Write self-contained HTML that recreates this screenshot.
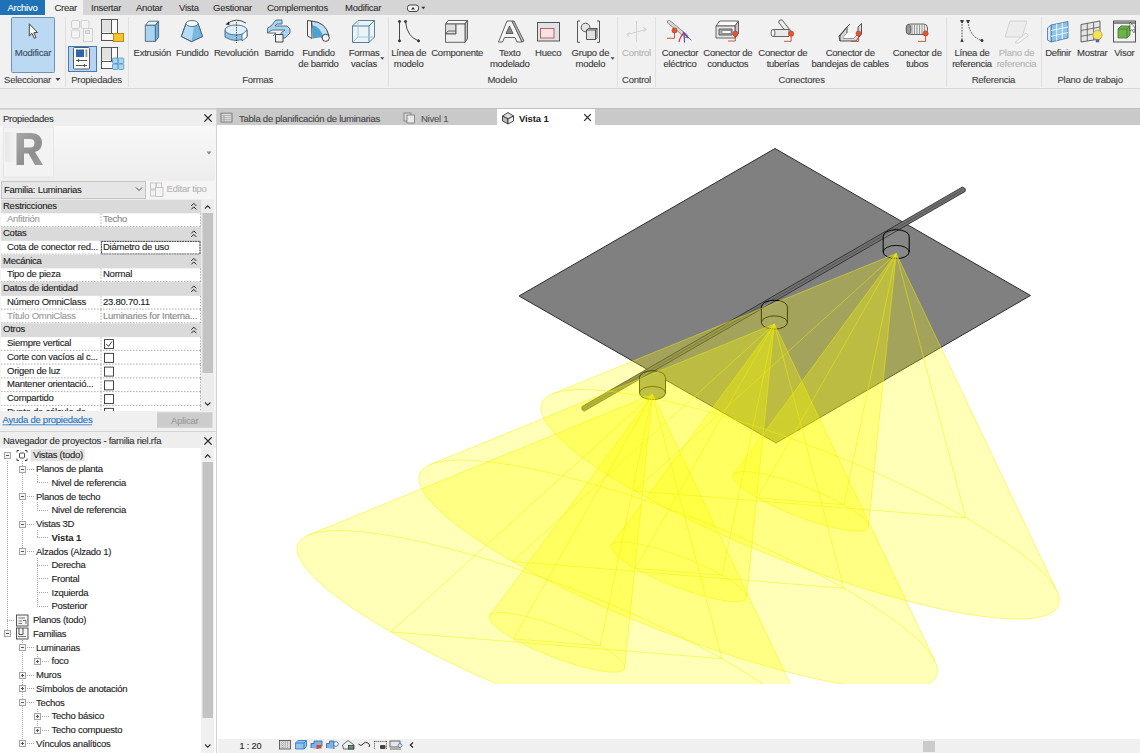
<!DOCTYPE html>
<html><head><meta charset="utf-8"><style>
html,body{margin:0;padding:0;width:1140px;height:753px;overflow:hidden;background:#fff}
svg{display:block;font-family:"Liberation Sans", sans-serif}
</style></head><body>
<svg width="1140" height="753" viewBox="0 0 1140 753">
<rect x="0" y="0" width="1140" height="753" fill="#f0f0f0" />
<rect x="0" y="0" width="1140" height="15" fill="#d5d5d5" />
<rect x="0" y="0" width="45" height="15" fill="#1f72b5" />
<rect x="45" y="0" width="38" height="15" fill="#f1f1f1" />
<text x="22.5" y="10.9" font-size="9.5" fill="#ffffff" stroke="#ffffff" stroke-width="0.12" text-anchor="middle" font-weight="normal" letter-spacing="-0.25" >Archivo</text>
<text x="54.5" y="10.9" font-size="9.5" fill="#333" stroke="#333" stroke-width="0.12" text-anchor="start" font-weight="normal" letter-spacing="-0.25" >Crear</text>
<text x="91" y="10.9" font-size="9.5" fill="#333" stroke="#333" stroke-width="0.12" text-anchor="start" font-weight="normal" letter-spacing="-0.25" >Insertar</text>
<text x="136" y="10.9" font-size="9.5" fill="#333" stroke="#333" stroke-width="0.12" text-anchor="start" font-weight="normal" letter-spacing="-0.25" >Anotar</text>
<text x="179" y="10.9" font-size="9.5" fill="#333" stroke="#333" stroke-width="0.12" text-anchor="start" font-weight="normal" letter-spacing="-0.25" >Vista</text>
<text x="213" y="10.9" font-size="9.5" fill="#333" stroke="#333" stroke-width="0.12" text-anchor="start" font-weight="normal" letter-spacing="-0.25" >Gestionar</text>
<text x="267" y="10.9" font-size="9.5" fill="#333" stroke="#333" stroke-width="0.12" text-anchor="start" font-weight="normal" letter-spacing="-0.25" >Complementos</text>
<text x="345" y="10.9" font-size="9.5" fill="#333" stroke="#333" stroke-width="0.12" text-anchor="start" font-weight="normal" letter-spacing="-0.25" >Modificar</text>
<rect x="0" y="15" width="1140" height="74" fill="#f1f1f1" />
<line x1="0" y1="88.5" x2="1140" y2="88.5" stroke="#d9d9d9" stroke-width="1" />
<line x1="65.5" y1="17" x2="65.5" y2="87" stroke="#e0e0e0" stroke-width="1" />
<line x1="128.5" y1="17" x2="128.5" y2="87" stroke="#e0e0e0" stroke-width="1" />
<line x1="388.5" y1="17" x2="388.5" y2="87" stroke="#e0e0e0" stroke-width="1" />
<line x1="617.5" y1="17" x2="617.5" y2="87" stroke="#e0e0e0" stroke-width="1" />
<line x1="655.5" y1="17" x2="655.5" y2="87" stroke="#e0e0e0" stroke-width="1" />
<line x1="946.5" y1="17" x2="946.5" y2="87" stroke="#e0e0e0" stroke-width="1" />
<line x1="1041.5" y1="17" x2="1041.5" y2="87" stroke="#e0e0e0" stroke-width="1" />
<rect x="0" y="89" width="1140" height="20" fill="#eeeeee" />
<line x1="0" y1="108.5" x2="216" y2="108.5" stroke="#cfcfcf" stroke-width="1" />
<rect x="0" y="109" width="216" height="323" fill="#f5f5f5" />
<rect x="0" y="109" width="216" height="17" fill="#eeeeee" />
<text x="3" y="121.9" font-size="9.5" fill="#333" stroke="#333" stroke-width="0.12" text-anchor="start" font-weight="normal" letter-spacing="-0.25" >Propiedades</text>
<rect x="216" y="108.5" width="924" height="16.5" fill="#c9c9c9" />
<rect x="497" y="108.5" width="98" height="16.5" fill="#ffffff" />
<text x="239" y="121.5" font-size="9.5" fill="#444" stroke="#444" stroke-width="0.12" text-anchor="start" font-weight="normal" letter-spacing="-0.25" >Tabla de planificación de luminarias</text>
<text x="421" y="121.5" font-size="9.5" fill="#555" stroke="#555" stroke-width="0.12" text-anchor="start" font-weight="normal" letter-spacing="-0.25" >Nivel 1</text>
<text x="519" y="121.5" font-size="9.5" fill="#222" stroke="#222" stroke-width="0" text-anchor="start" font-weight="bold" letter-spacing="-0.1" >Vista 1</text>
<rect x="216" y="125" width="924" height="628" fill="#ffffff" />
<line x1="216.5" y1="109" x2="216.5" y2="753" stroke="#d2d2d2" stroke-width="1" />
<rect x="218" y="739" width="922" height="14" fill="#f0f0f0" />
<text x="239.5" y="748.7" font-size="9" fill="#222" stroke="#222" stroke-width="0.12" text-anchor="start" font-weight="normal" letter-spacing="-0.1" >1 : 20</text>
<text x="152.3" y="56.3" font-size="9.5" fill="#3a3a3a" stroke="#3a3a3a" stroke-width="0.12" text-anchor="middle" font-weight="normal" letter-spacing="-0.25" >Extrusión</text>
<text x="192.2" y="56.3" font-size="9.5" fill="#3a3a3a" stroke="#3a3a3a" stroke-width="0.12" text-anchor="middle" font-weight="normal" letter-spacing="-0.25" >Fundido</text>
<text x="236.2" y="56.3" font-size="9.5" fill="#3a3a3a" stroke="#3a3a3a" stroke-width="0.12" text-anchor="middle" font-weight="normal" letter-spacing="-0.25" >Revolución</text>
<text x="279" y="56.3" font-size="9.5" fill="#3a3a3a" stroke="#3a3a3a" stroke-width="0.12" text-anchor="middle" font-weight="normal" letter-spacing="-0.25" >Barrido</text>
<text x="318.5" y="56.3" font-size="9.5" fill="#3a3a3a" stroke="#3a3a3a" stroke-width="0.12" text-anchor="middle" font-weight="normal" letter-spacing="-0.25" >Fundido</text>
<text x="318.5" y="67.2" font-size="9.5" fill="#3a3a3a" stroke="#3a3a3a" stroke-width="0.12" text-anchor="middle" font-weight="normal" letter-spacing="-0.25" >de barrido</text>
<text x="364.1" y="56.3" font-size="9.5" fill="#3a3a3a" stroke="#3a3a3a" stroke-width="0.12" text-anchor="middle" font-weight="normal" letter-spacing="-0.25" >Formas</text>
<text x="364.1" y="67.2" font-size="9.5" fill="#3a3a3a" stroke="#3a3a3a" stroke-width="0.12" text-anchor="middle" font-weight="normal" letter-spacing="-0.25" >vacías</text>
<text x="408.7" y="56.3" font-size="9.5" fill="#3a3a3a" stroke="#3a3a3a" stroke-width="0.12" text-anchor="middle" font-weight="normal" letter-spacing="-0.25" >Línea de</text>
<text x="408.7" y="67.2" font-size="9.5" fill="#3a3a3a" stroke="#3a3a3a" stroke-width="0.12" text-anchor="middle" font-weight="normal" letter-spacing="-0.25" >modelo</text>
<text x="457.2" y="56.3" font-size="9.5" fill="#3a3a3a" stroke="#3a3a3a" stroke-width="0.12" text-anchor="middle" font-weight="normal" letter-spacing="-0.25" >Componente</text>
<text x="509.8" y="56.3" font-size="9.5" fill="#3a3a3a" stroke="#3a3a3a" stroke-width="0.12" text-anchor="middle" font-weight="normal" letter-spacing="-0.25" >Texto</text>
<text x="509.8" y="67.2" font-size="9.5" fill="#3a3a3a" stroke="#3a3a3a" stroke-width="0.12" text-anchor="middle" font-weight="normal" letter-spacing="-0.25" >modelado</text>
<text x="548.2" y="56.3" font-size="9.5" fill="#3a3a3a" stroke="#3a3a3a" stroke-width="0.12" text-anchor="middle" font-weight="normal" letter-spacing="-0.25" >Hueco</text>
<text x="590.4" y="56.3" font-size="9.5" fill="#3a3a3a" stroke="#3a3a3a" stroke-width="0.12" text-anchor="middle" font-weight="normal" letter-spacing="-0.25" >Grupo de</text>
<text x="590.4" y="67.2" font-size="9.5" fill="#3a3a3a" stroke="#3a3a3a" stroke-width="0.12" text-anchor="middle" font-weight="normal" letter-spacing="-0.25" >modelo</text>
<text x="636.5" y="56.3" font-size="9.5" fill="#b4b4b4" stroke="#b4b4b4" stroke-width="0.12" text-anchor="middle" font-weight="normal" letter-spacing="-0.25" >Control</text>
<text x="680" y="56.3" font-size="9.5" fill="#3a3a3a" stroke="#3a3a3a" stroke-width="0.12" text-anchor="middle" font-weight="normal" letter-spacing="-0.25" >Conector</text>
<text x="680" y="67.2" font-size="9.5" fill="#3a3a3a" stroke="#3a3a3a" stroke-width="0.12" text-anchor="middle" font-weight="normal" letter-spacing="-0.25" >eléctrico</text>
<text x="727.8" y="56.3" font-size="9.5" fill="#3a3a3a" stroke="#3a3a3a" stroke-width="0.12" text-anchor="middle" font-weight="normal" letter-spacing="-0.25" >Conector de</text>
<text x="727.8" y="67.2" font-size="9.5" fill="#3a3a3a" stroke="#3a3a3a" stroke-width="0.12" text-anchor="middle" font-weight="normal" letter-spacing="-0.25" >conductos</text>
<text x="782.8" y="56.3" font-size="9.5" fill="#3a3a3a" stroke="#3a3a3a" stroke-width="0.12" text-anchor="middle" font-weight="normal" letter-spacing="-0.25" >Conector de</text>
<text x="782.8" y="67.2" font-size="9.5" fill="#3a3a3a" stroke="#3a3a3a" stroke-width="0.12" text-anchor="middle" font-weight="normal" letter-spacing="-0.25" >tuberías</text>
<text x="850.2" y="56.3" font-size="9.5" fill="#3a3a3a" stroke="#3a3a3a" stroke-width="0.12" text-anchor="middle" font-weight="normal" letter-spacing="-0.25" >Conector de</text>
<text x="850.2" y="67.2" font-size="9.5" fill="#3a3a3a" stroke="#3a3a3a" stroke-width="0.12" text-anchor="middle" font-weight="normal" letter-spacing="-0.25" >bandejas de cables</text>
<text x="917.2" y="56.3" font-size="9.5" fill="#3a3a3a" stroke="#3a3a3a" stroke-width="0.12" text-anchor="middle" font-weight="normal" letter-spacing="-0.25" >Conector de</text>
<text x="917.2" y="67.2" font-size="9.5" fill="#3a3a3a" stroke="#3a3a3a" stroke-width="0.12" text-anchor="middle" font-weight="normal" letter-spacing="-0.25" >tubos</text>
<text x="972" y="56.3" font-size="9.5" fill="#3a3a3a" stroke="#3a3a3a" stroke-width="0.12" text-anchor="middle" font-weight="normal" letter-spacing="-0.25" >Línea de</text>
<text x="972" y="67.2" font-size="9.5" fill="#3a3a3a" stroke="#3a3a3a" stroke-width="0.12" text-anchor="middle" font-weight="normal" letter-spacing="-0.25" >referencia</text>
<text x="1016.5" y="56.3" font-size="9.5" fill="#b4b4b4" stroke="#b4b4b4" stroke-width="0.12" text-anchor="middle" font-weight="normal" letter-spacing="-0.25" >Plano de</text>
<text x="1016.5" y="67.2" font-size="9.5" fill="#b4b4b4" stroke="#b4b4b4" stroke-width="0.12" text-anchor="middle" font-weight="normal" letter-spacing="-0.25" >referencia</text>
<text x="1058" y="56.3" font-size="9.5" fill="#3a3a3a" stroke="#3a3a3a" stroke-width="0.12" text-anchor="middle" font-weight="normal" letter-spacing="-0.25" >Definir</text>
<text x="1092.3" y="56.3" font-size="9.5" fill="#3a3a3a" stroke="#3a3a3a" stroke-width="0.12" text-anchor="middle" font-weight="normal" letter-spacing="-0.25" >Mostrar</text>
<text x="1124.3" y="56.3" font-size="9.5" fill="#3a3a3a" stroke="#3a3a3a" stroke-width="0.12" text-anchor="middle" font-weight="normal" letter-spacing="-0.25" >Visor</text>
<text x="27.5" y="83.2" font-size="9.5" fill="#444" stroke="#444" stroke-width="0.12" text-anchor="middle" font-weight="normal" letter-spacing="-0.25" >Seleccionar</text>
<text x="96.5" y="83.2" font-size="9.5" fill="#444" stroke="#444" stroke-width="0.12" text-anchor="middle" font-weight="normal" letter-spacing="-0.25" >Propiedades</text>
<text x="257.6" y="83.2" font-size="9.5" fill="#444" stroke="#444" stroke-width="0.12" text-anchor="middle" font-weight="normal" letter-spacing="-0.25" >Formas</text>
<text x="502.3" y="83.2" font-size="9.5" fill="#444" stroke="#444" stroke-width="0.12" text-anchor="middle" font-weight="normal" letter-spacing="-0.25" >Modelo</text>
<text x="636.5" y="83.2" font-size="9.5" fill="#444" stroke="#444" stroke-width="0.12" text-anchor="middle" font-weight="normal" letter-spacing="-0.25" >Control</text>
<text x="801.6" y="83.2" font-size="9.5" fill="#444" stroke="#444" stroke-width="0.12" text-anchor="middle" font-weight="normal" letter-spacing="-0.25" >Conectores</text>
<text x="993.4" y="83.2" font-size="9.5" fill="#444" stroke="#444" stroke-width="0.12" text-anchor="middle" font-weight="normal" letter-spacing="-0.25" >Referencia</text>
<text x="1090.1" y="83.2" font-size="9.5" fill="#444" stroke="#444" stroke-width="0.12" text-anchor="middle" font-weight="normal" letter-spacing="-0.25" >Plano de trabajo</text>
<path d="M55.4 78.0h5l-2.5 3z" fill="#444"/>
<path d="M380.3 57.25h4l-2.0 2.5z" fill="#444"/>
<path d="M610.6 57.25h4l-2.0 2.5z" fill="#444"/>
<path d="M421.3 6.75h4l-2.0 2.5z" fill="#333"/>
<rect x="11.5" y="17.5" width="43" height="55" rx="1" fill="#bcd9f4" stroke="#6f92b6" stroke-width="1"/>
<text x="33" y="55.8" font-size="9.5" fill="#3a4a5a" stroke="#3a4a5a" stroke-width="0.12" text-anchor="middle" font-weight="normal" letter-spacing="-0.25" >Modificar</text>
<path d="M29.3 23.8 L29.3 36 L32 33.4 L34.2 38.3 L36 37.5 L33.8 32.7 L37.4 32.5 Z" fill="#fff" stroke="#333" stroke-width="0.9" stroke-linejoin="round"/>
<g fill="#f3f3f3" stroke="#cfcfcf" stroke-width="1"><rect x="71.5" y="20.5" width="8" height="8" rx="1.5"/><rect x="81" y="20.5" width="8" height="8" rx="1.5"/><rect x="71.5" y="30" width="8" height="8" rx="1.5"/><rect x="83.5" y="28.5" width="9" height="13"/><rect x="85.5" y="30.5" width="4" height="3" fill="#e3e3e3"/></g>
<g stroke="#555" stroke-width="1"><rect x="101.5" y="19.5" width="16" height="21" fill="#fafafa"/><rect x="102" y="20" width="9" height="12" fill="#e2e2e2" stroke="none"/><line x1="111.5" y1="20" x2="111.5" y2="33"/><line x1="101.5" y1="33.5" x2="117.5" y2="33.5"/><rect x="113.5" y="33.5" width="10" height="8" fill="#f4c431" stroke="#b88c16"/></g>
<rect x="68.5" y="46.5" width="28" height="25" fill="#b7d5f2" stroke="#3e7dbd" stroke-width="1"/>
<rect x="73.5" y="47.5" width="16" height="21.5" rx="1" fill="#fbfbfb" stroke="#5b5b5b" stroke-width="1"/>
<rect x="76" y="49.5" width="8" height="7.5" fill="#2f68a8"/><rect x="85.5" y="49.5" width="1.8" height="7.5" fill="#999"/>
<g stroke="#444" stroke-width="0.9"><line x1="76" y1="60.5" x2="87" y2="60.5"/><line x1="78.5" y1="59" x2="78.5" y2="62"/><line x1="76" y1="65.5" x2="87" y2="65.5"/><line x1="84.5" y1="64" x2="84.5" y2="67"/></g>
<g stroke="#555" stroke-width="1"><rect x="101.5" y="47.5" width="16" height="21" fill="#fafafa"/><rect x="102" y="48" width="9" height="12" fill="#e2e2e2" stroke="none"/><line x1="111.5" y1="48" x2="111.5" y2="61"/><line x1="101.5" y1="61.5" x2="117.5" y2="61.5"/></g>
<g fill="#a9d6f2" stroke="#4f8fc0" stroke-width="0.8"><rect x="112.5" y="58" width="5.5" height="5.5" rx="1"/><rect x="118.3" y="58" width="5.5" height="5.5" rx="1"/><rect x="112.5" y="64" width="5.5" height="5.5" rx="1"/><rect x="118.3" y="64" width="5.5" height="5.5" rx="1"/></g>
<g stroke="#47657e" stroke-width="0.9" stroke-linejoin="round"><path d="M145.3 25.3 L148.8 21.2 L158.6 21.2 L155.3 25.3 Z" fill="#e9f4fb"/><path d="M155.3 25.3 L158.6 21.2 L158.6 37.4 L155.3 41.4 Z" fill="#6fb0da"/><rect x="145.3" y="25.3" width="10" height="16.1" fill="#a8d4f0"/></g>
<g stroke="#47657e" stroke-width="0.9" stroke-linejoin="round"><path d="M186 23.5 L181.3 36.5 L191.5 41.6 L202.5 36.5 L198 23.5 Z" fill="#b5dcf3"/><path d="M194 26 L198 23.5 L202.5 36.5 L191.5 41.6 Z" fill="#79b8df" stroke="none"/><path d="M181.3 36.5 L191.5 41.6 L202.5 36.5" fill="none"/><path d="M186 23.5 L181.3 36.5 M198 23.5 L202.5 36.5" fill="none"/><ellipse cx="192" cy="23.5" rx="6" ry="3" fill="#f4f9fc"/></g>
<g stroke="#47657e" stroke-width="0.9" stroke-linejoin="round"><path d="M225 30 L225 37 Q236 44 247 37 L247 30" fill="#8cc5e6"/><ellipse cx="236" cy="30" rx="11" ry="5" fill="#dff0fa"/><path d="M242 34.5 L247 30 L247 37 L242 41 Z" fill="#fff"/><path d="M227.5 23.5 Q236 17 246 23" fill="none" stroke="#333"/><path d="M225.5 24.5 L229 21.5 L229.5 25 Z" fill="#222" stroke="none"/><line x1="236.5" y1="22" x2="236.5" y2="43" stroke="#333" stroke-width="0.8" stroke-dasharray="1.5 1"/></g>
<g stroke="#47657e" stroke-width="0.9" stroke-linejoin="round"><path d="M271 26 L276 20 L282 20 L282 24 L277 24 L275 26 L287 26 L290 29 L290 33 L285 38 L281 38 L281 33 L285 30 L272 30 L267.5 33 L267.5 28 Z" fill="#a8d4f0"/><path d="M268 33 L276 33 L273 36" fill="none"/><rect x="275.5" y="34.5" width="7.5" height="7.5" fill="#f0f0f0" stroke="#333"/></g>
<g stroke="#333" stroke-width="0.9" stroke-linejoin="round"><path d="M311.5 21 Q326 22 329 36 L322 38 Q320 28 312 27 Z" fill="#bfe0f4"/><path d="M312 25 Q321 27 323 37 L313 38.5 Z" fill="#4ea0d0" stroke="none"/><path d="M307.5 20.5 L311.5 21 L312 38.5 L307.5 36 Z" fill="#f4f4f4"/><circle cx="325.7" cy="37.8" r="3.6" fill="#f4f4f4"/></g>
<g stroke="#4a6f8f" stroke-width="0.9" fill="none" stroke-linejoin="round"><path d="M352.5 26 L358 20.5 L374.5 20.5 L374.5 37 L369 42.5 L352.5 42.5 Z" fill="#e8f3fa"/><path d="M352.5 26 L369 26 L374.5 20.5 M369 26 L369 42.5"/><path d="M358 20.5 L358 37 L374.5 37 M358 37 L352.5 42.5" stroke="#9ec3dc"/></g>
<g stroke="#333" stroke-width="0.9" fill="#333"><line x1="399.5" y1="21.5" x2="399.5" y2="40.8"/><path d="M405.5 21.5 Q407 37 418.5 40.8" fill="none"/><circle cx="399.5" cy="21.5" r="1.1"/><circle cx="399.5" cy="40.8" r="1.1"/><circle cx="405.5" cy="21.5" r="1.1"/><circle cx="418.5" cy="40.8" r="1.1"/></g>
<g stroke="#555" stroke-width="0.9" stroke-linejoin="round"><path d="M445.5 24 L448 20.5 L467.5 20.5 L465 24 Z" fill="#f7f7f7"/><path d="M465 24 L467.5 20.5 L467.5 39 L465 42.3 Z" fill="#c6c6c6"/><path d="M445.5 24 L456 24 L456 34 L445.5 34 Z" fill="#dedede"/><path d="M456 24 L465 24 L465 42.3 L445.5 42.3 L445.5 34 L456 34 Z" fill="#efefef"/><path d="M445.5 34 L448 31 L456 31" fill="none"/></g>
<g stroke="#555" stroke-width="0.9" stroke-linejoin="round"><path d="M507 21 L512 21 L522 42 L517 42 L515 37.5 L504.5 37.5 L502.5 42 L498.5 42 Z" fill="#f5f5f5"/><path d="M512 21 L514 21 L524 41 L522 42 Z" fill="#bdbdbd"/><path d="M506 33.5 L513 33.5 L509.5 26 Z" fill="#888"/></g>
<rect x="537.5" y="22.5" width="22" height="18.5" fill="#dfe3e6" stroke="#555" stroke-width="1"/>
<rect x="540.5" y="28.5" width="13.5" height="9.5" fill="#f6e4e4" stroke="#c0504d" stroke-width="0.9"/>
<g stroke="#444" stroke-width="0.9" fill="none"><path d="M580 21 L577.5 21 L577.5 42.3 L580 42.3"/><path d="M597 21 L599.5 21 L599.5 42.3 L597 42.3"/><circle cx="585.5" cy="27.5" r="4.3" fill="#e6e6e6"/><path d="M586.5 30 L588.5 28.5 L597 28.5 L597 37.5 L595.5 39.5 L586.5 39.5 Z" fill="#dde1e5"/><path d="M586.5 30 L595.5 30 L597 28.5 M595.5 30 L595.5 39.5"/></g>
<g stroke="#d2d2d2" stroke-width="1" fill="none"><line x1="636.5" y1="21" x2="636.5" y2="42"/><line x1="627" y1="34.5" x2="646" y2="29.5"/><path d="M643 27.5 L646.5 29.5 L643.5 31.5"/><path d="M630 32.5 L626.5 34.5 L629.5 36.5"/></g>
<g stroke-linecap="round"><path d="M669 22 L686 36" stroke="#888" stroke-width="4"/><path d="M669 22 L686 36" stroke="#d8d8d8" stroke-width="2.4"/><path d="M683 32 L691 40" stroke="#4a5bb0" stroke-width="0.9"/><path d="M679 41.5 Q681 35 684 33" stroke="#c53030" stroke-width="1.1" fill="none"/><path d="M684.5 42 L684 33 L688 38" stroke="#6a3ba8" stroke-width="1.1" fill="none"/></g>
<g stroke="#c24a2a" stroke-width="0.9" fill="none"><path d="M674.5 30.4 L674.5 38.3 L667 38.3"/></g><circle cx="674.5" cy="30.4" r="2.6" fill="#e4572e" stroke="#a33" stroke-width="0.5"/>
<g stroke="#555" stroke-width="0.9" stroke-linejoin="round"><path d="M716 26 L719.5 21 L738.5 21 L735 26 Z" fill="#fafafa"/><path d="M735 26 L738.5 21 L738.5 33 L735 38 Z" fill="#c8c8c8"/><rect x="716" y="26" width="19" height="12" fill="#e6e6e6"/><rect x="719" y="29" width="13" height="6" fill="#aaa"/><rect x="722" y="30.5" width="9" height="3" fill="#fff" stroke="#666" stroke-width="0.6"/></g>
<g stroke="#c24a2a" stroke-width="0.9" fill="none"><path d="M735.3 33.7 L735.3 41 L728 41"/></g><circle cx="735.3" cy="33.7" r="2.6" fill="#e4572e" stroke="#a33" stroke-width="0.5"/>
<g stroke="#555" stroke-width="0.9"><path d="M781 22 L789 32" stroke="#666" stroke-width="5.2" stroke-linecap="round"/><path d="M781 22 L789 32" stroke="#eee" stroke-width="3.4" stroke-linecap="round"/><path d="M773 29.5 L789 29.5 L789 36.5 L773 36.5" fill="#e8e8e8"/><ellipse cx="773" cy="33" rx="2" ry="3.5" fill="#f5f5f5"/></g>
<g stroke="#c24a2a" stroke-width="0.9" fill="none"><path d="M791.2 33.7 L791.2 41.3 L784 41.3"/></g><circle cx="791.2" cy="33.7" r="2.6" fill="#e4572e" stroke="#a33" stroke-width="0.5"/>
<g stroke="#444" stroke-width="0.9" stroke-linejoin="round"><path d="M839 36 L847 27 L847 33 L843 38 L854 38 L858 33 L858 27 L861.5 23.5 L861.5 34 L856 41 L840 41 Z" fill="#d8d8d8"/><path d="M840 41 L840 36 L847 27" fill="none"/><path d="M843 38 L847 33 L858 33 L854 38 Z" fill="#fff" stroke="none"/><path d="M847 27 L850 24" fill="none"/></g>
<g stroke="#c24a2a" stroke-width="0.9" fill="none"><path d="M858.5 33.5 L858.5 41.4 L851 41.4"/></g><circle cx="858.5" cy="33.5" r="2.6" fill="#e4572e" stroke="#a33" stroke-width="0.5"/>
<g stroke="#555" stroke-width="0.9"><rect x="906.5" y="24" width="21" height="10.5" rx="4" fill="#e8e8e8"/><ellipse cx="908.5" cy="29.3" rx="2.3" ry="5" fill="#999"/><line x1="912" y1="24.5" x2="912" y2="34" stroke="#777" stroke-width="0.7"/><line x1="914.5" y1="24.5" x2="914.5" y2="34" stroke="#777" stroke-width="0.7"/><line x1="917" y1="24.5" x2="917" y2="34" stroke="#777" stroke-width="0.7"/><line x1="919.5" y1="24.5" x2="919.5" y2="34" stroke="#777" stroke-width="0.7"/><line x1="922" y1="24.5" x2="922" y2="34" stroke="#777" stroke-width="0.7"/><line x1="924.5" y1="24.5" x2="924.5" y2="34" stroke="#777" stroke-width="0.7"/></g>
<g stroke="#c24a2a" stroke-width="0.9" fill="none"><path d="M925.6 33.4 L925.6 41.4 L918 41.4"/></g><circle cx="925.6" cy="33.4" r="2.6" fill="#e4572e" stroke="#a33" stroke-width="0.5"/>
<g stroke="#333" stroke-width="0.9" fill="#333"><line x1="962" y1="21.5" x2="962" y2="40.5" stroke-dasharray="1.6 1.2"/><path d="M968 21.5 Q969.5 37 982 40.5" fill="none" stroke-dasharray="1.6 1.2"/><path d="M960.5 20.5 L963.5 20.5 L962 23 Z"/><path d="M966.5 20.5 L969.5 20.5 L968 23 Z"/><path d="M960.8 41.5 L963.2 41.5 L962 39.5 Z"/><circle cx="982" cy="40.5" r="1.1"/></g>
<g stroke="#cfcfcf" stroke-width="0.9" fill="#ececec"><path d="M1010 21 L1027 21 L1022 37 L1005 37 Z"/><path d="M1016 41.5 L1026 33 L1028.5 35.5 L1018.5 43 L1015.5 43 Z" fill="#f3f3f3"/></g>
<g stroke="#3f6f9c" stroke-width="0.8" stroke-linejoin="round"><path d="M1051 25 L1068 21.5 L1068 38 L1051 42 Z" fill="#8ec3ea"/><path d="M1047.5 28 L1051 25 L1051 42 L1047.5 40 Z" fill="#d8ecf8"/><path d="M1056.7 23.8 L1056.7 40.6 M1062.3 22.7 L1062.3 39.3 M1051 30.6 L1068 27 M1051 36.3 L1068 32.5" fill="none" stroke="#e9f5fc" stroke-width="1"/></g>
<g stroke="#444" stroke-width="0.8" stroke-linejoin="round"><path d="M1081 24.5 L1100 21 L1100 39 L1081 42 Z" fill="#e4e4e4"/><path d="M1087.3 23.3 L1087.3 41 M1093.6 22.2 L1093.6 40 M1081 30.5 L1100 27 M1081 36.3 L1100 33" fill="none" stroke="#555"/><circle cx="1097.5" cy="35" r="4.6" fill="#f6e35a" stroke="#b9a22a"/><rect x="1095.8" y="39.5" width="3.4" height="2.8" fill="#5a5fa8" stroke="none"/></g>
<g><rect x="1113.5" y="21" width="22" height="21" fill="#f4f4f4" stroke="#555" stroke-width="1"/><rect x="1114" y="21.5" width="21" height="2.5" fill="#888"/><path d="M1118 29 L1121 26 L1130 26 L1130 35 L1127 38 L1118 38 Z" fill="#6db34a" stroke="#3c7a2a" stroke-width="0.8"/><path d="M1118 29 L1127 29 L1130 26 M1127 29 L1127 38" fill="none" stroke="#3c7a2a" stroke-width="0.8"/><path d="M1130 22 L1130 31 L1132 29.5 L1133.5 32.5 L1135 32 L1133.7 29 L1136 29 Z" fill="#fff" stroke="#444" stroke-width="0.7"/></g>
<rect x="407.5" y="5" width="11" height="6.5" rx="2.5" fill="#f3f3f3" stroke="#333" stroke-width="0.9"/><path d="M411 9.5 L413 7 L415 9.5 Z" fill="#333"/>
<line x1="0" y1="109.5" x2="216" y2="109.5" stroke="#d6d6d6" stroke-width="1" />
<path d="M204.4 114.4L211.6 121.6M211.6 114.4L204.4 121.6" stroke="#222" stroke-width="1.3"/>
<defs><linearGradient id="pv" x1="0" y1="0" x2="0" y2="1"><stop offset="0" stop-color="#f8f8f8"/><stop offset="1" stop-color="#ededed"/></linearGradient><linearGradient id="rg" x1="0" y1="0" x2="1" y2="1"><stop offset="0" stop-color="#a9a9a9"/><stop offset="0.6" stop-color="#8f8f8f"/><stop offset="1" stop-color="#9d9d9d"/></linearGradient></defs>
<rect x="1" y="126" width="214" height="55" fill="url(#pv)" />
<defs><linearGradient id="rbx" x1="0" y1="0" x2="1" y2="0"><stop offset="0" stop-color="#e4e4e4"/><stop offset="0.5" stop-color="#f2f2f2"/><stop offset="1" stop-color="#f4f4f4"/></linearGradient></defs>
<rect x="3.5" y="127" width="50" height="50" fill="#f3f3f3" stroke="#e6e6e6" stroke-width="1"/>
<rect x="5" y="132" width="20" height="30" fill="url(#rbx)" opacity="0.8"/>
<path d="M16.5 165 L16.5 133 L31 133 Q42 133.5 42 143 Q42 150 35 152 L43 165 L35 165 L28.5 153.5 L24 153.5 L24 165 Z M24 139 L24 147.5 L30 147.5 Q34.5 147.5 34.5 143 Q34.5 139 30 139 Z" fill="url(#rg)" fill-rule="evenodd"/>
<path d="M206.5 151.5h5l-2.5 3z" fill="#888"/>
<rect x="1.5" y="181.5" width="144" height="17" fill="#e6e6e6" stroke="#c4c4c4" stroke-width="1"/>
<text x="4" y="192.6" font-size="9.5" fill="#222" stroke="#222" stroke-width="0.12" text-anchor="start" font-weight="normal" letter-spacing="-0.25" >Familia: Luminarias</text>
<path d="M136 187.5 L139 190.5 L142 187.5" fill="none" stroke="#444" stroke-width="1"/>
<g stroke="#c2c2c2" stroke-width="0.9" fill="#f4f4f4"><rect x="150.5" y="183" width="5.5" height="6"/><rect x="150.5" y="190" width="5.5" height="6"/><rect x="156.5" y="183" width="5" height="6"/><rect x="155.5" y="187.5" width="7.5" height="9"/></g>
<text x="166.6" y="191.6" font-size="9.5" fill="#b5b5b5" stroke="#b5b5b5" stroke-width="0.12" text-anchor="start" font-weight="normal" letter-spacing="-0.25" >Editar tipo</text>
<defs><clipPath id="tbl"><rect x="0" y="199" width="201" height="212"/></clipPath></defs>
<g clip-path="url(#tbl)">
<rect x="1" y="199.6" width="200" height="212" fill="#ffffff" />
<rect x="1" y="199.6" width="200" height="13.75" fill="#dadada" />
<text x="3" y="208.7" font-size="9.5" fill="#222" stroke="#222" stroke-width="0.12" text-anchor="start" font-weight="normal" letter-spacing="-0.25" >Restricciones</text>
<path d="M191.3 205.9L193.8 203.4L196.3 205.9M191.3 209.4L193.8 206.9L196.3 209.4" fill="none" stroke="#222" stroke-width="1"/>
<text x="7" y="222.45" font-size="9.5" fill="#999" stroke="#999" stroke-width="0.12" text-anchor="start" font-weight="normal" letter-spacing="-0.25" >Anfitrión</text>
<text x="103" y="222.45" font-size="9.5" fill="#888" stroke="#888" stroke-width="0.12" text-anchor="start" font-weight="normal" letter-spacing="-0.25" >Techo</text>
<path d="M1 226.6H200.5" stroke="#9a9a9a" stroke-width="0.8" stroke-dasharray="1.5 1.5"/>
<path d="M101 213.35V227.1 M200.5 213.35V227.1" stroke="#9a9a9a" stroke-width="0.8" stroke-dasharray="1.5 1.5"/>
<rect x="1" y="227.1" width="200" height="13.75" fill="#dadada" />
<text x="3" y="236.2" font-size="9.5" fill="#222" stroke="#222" stroke-width="0.12" text-anchor="start" font-weight="normal" letter-spacing="-0.25" >Cotas</text>
<path d="M191.3 233.4L193.8 230.9L196.3 233.4M191.3 236.9L193.8 234.4L196.3 236.9" fill="none" stroke="#222" stroke-width="1"/>
<text x="7" y="249.95" font-size="9.5" fill="#222" stroke="#222" stroke-width="0.12" text-anchor="start" font-weight="normal" letter-spacing="-0.25" >Cota de conector red...</text>
<text x="103" y="249.95" font-size="9.5" fill="#222" stroke="#222" stroke-width="0.12" text-anchor="start" font-weight="normal" letter-spacing="-0.25" >Diámetro de uso</text>
<rect x="101.5" y="241.35" width="98.5" height="12.75" fill="none" stroke="#333" stroke-width="1" stroke-dasharray="2 0.6"/>
<path d="M1 254.1H200.5" stroke="#9a9a9a" stroke-width="0.8" stroke-dasharray="1.5 1.5"/>
<path d="M101 240.85V254.6 M200.5 240.85V254.6" stroke="#9a9a9a" stroke-width="0.8" stroke-dasharray="1.5 1.5"/>
<rect x="1" y="254.6" width="200" height="13.75" fill="#dadada" />
<text x="3" y="263.7" font-size="9.5" fill="#222" stroke="#222" stroke-width="0.12" text-anchor="start" font-weight="normal" letter-spacing="-0.25" >Mecánica</text>
<path d="M191.3 260.9L193.8 258.4L196.3 260.9M191.3 264.4L193.8 261.9L196.3 264.4" fill="none" stroke="#222" stroke-width="1"/>
<text x="7" y="277.45000000000005" font-size="9.5" fill="#222" stroke="#222" stroke-width="0.12" text-anchor="start" font-weight="normal" letter-spacing="-0.25" >Tipo de pieza</text>
<text x="103" y="277.45000000000005" font-size="9.5" fill="#222" stroke="#222" stroke-width="0.12" text-anchor="start" font-weight="normal" letter-spacing="-0.25" >Normal</text>
<path d="M1 281.6H200.5" stroke="#9a9a9a" stroke-width="0.8" stroke-dasharray="1.5 1.5"/>
<path d="M101 268.35V282.1 M200.5 268.35V282.1" stroke="#9a9a9a" stroke-width="0.8" stroke-dasharray="1.5 1.5"/>
<rect x="1" y="282.1" width="200" height="13.75" fill="#dadada" />
<text x="3" y="291.20000000000005" font-size="9.5" fill="#222" stroke="#222" stroke-width="0.12" text-anchor="start" font-weight="normal" letter-spacing="-0.25" >Datos de identidad</text>
<path d="M191.3 288.40000000000003L193.8 285.90000000000003L196.3 288.40000000000003M191.3 291.90000000000003L193.8 289.40000000000003L196.3 291.90000000000003" fill="none" stroke="#222" stroke-width="1"/>
<text x="7" y="304.95000000000005" font-size="9.5" fill="#222" stroke="#222" stroke-width="0.12" text-anchor="start" font-weight="normal" letter-spacing="-0.25" >Número OmniClass</text>
<text x="103" y="304.95000000000005" font-size="9.5" fill="#222" stroke="#222" stroke-width="0.12" text-anchor="start" font-weight="normal" letter-spacing="-0.25" >23.80.70.11</text>
<path d="M1 309.1H200.5" stroke="#9a9a9a" stroke-width="0.8" stroke-dasharray="1.5 1.5"/>
<path d="M101 295.85V309.6 M200.5 295.85V309.6" stroke="#9a9a9a" stroke-width="0.8" stroke-dasharray="1.5 1.5"/>
<text x="7" y="318.70000000000005" font-size="9.5" fill="#999" stroke="#999" stroke-width="0.12" text-anchor="start" font-weight="normal" letter-spacing="-0.25" >Título OmniClass</text>
<text x="103" y="318.70000000000005" font-size="9.5" fill="#888" stroke="#888" stroke-width="0.12" text-anchor="start" font-weight="normal" letter-spacing="-0.25" >Luminaries for Interna...</text>
<path d="M1 322.85H200.5" stroke="#9a9a9a" stroke-width="0.8" stroke-dasharray="1.5 1.5"/>
<path d="M101 309.6V323.35 M200.5 309.6V323.35" stroke="#9a9a9a" stroke-width="0.8" stroke-dasharray="1.5 1.5"/>
<rect x="1" y="323.35" width="200" height="13.75" fill="#dadada" />
<text x="3" y="332.45000000000005" font-size="9.5" fill="#222" stroke="#222" stroke-width="0.12" text-anchor="start" font-weight="normal" letter-spacing="-0.25" >Otros</text>
<path d="M191.3 329.65000000000003L193.8 327.15000000000003L196.3 329.65000000000003M191.3 333.15000000000003L193.8 330.65000000000003L196.3 333.15000000000003" fill="none" stroke="#222" stroke-width="1"/>
<text x="7" y="346.20000000000005" font-size="9.5" fill="#222" stroke="#222" stroke-width="0.12" text-anchor="start" font-weight="normal" letter-spacing="-0.25" >Siempre vertical</text>
<rect x="104.5" y="339.6" width="9" height="9" fill="#fff" stroke="#333" stroke-width="0.9"/>
<path d="M106.3 344.1 L108.5 346.40000000000003 L112 341.40000000000003" fill="none" stroke="#333" stroke-width="1"/>
<path d="M1 350.35H200.5" stroke="#9a9a9a" stroke-width="0.8" stroke-dasharray="1.5 1.5"/>
<path d="M101 337.1V350.85 M200.5 337.1V350.85" stroke="#9a9a9a" stroke-width="0.8" stroke-dasharray="1.5 1.5"/>
<text x="7" y="359.95000000000005" font-size="9.5" fill="#222" stroke="#222" stroke-width="0.12" text-anchor="start" font-weight="normal" letter-spacing="-0.25" >Corte con vacíos al c...</text>
<rect x="104.5" y="353.35" width="9" height="9" fill="#fff" stroke="#333" stroke-width="0.9"/>
<path d="M1 364.1H200.5" stroke="#9a9a9a" stroke-width="0.8" stroke-dasharray="1.5 1.5"/>
<path d="M101 350.85V364.6 M200.5 350.85V364.6" stroke="#9a9a9a" stroke-width="0.8" stroke-dasharray="1.5 1.5"/>
<text x="7" y="373.70000000000005" font-size="9.5" fill="#222" stroke="#222" stroke-width="0.12" text-anchor="start" font-weight="normal" letter-spacing="-0.25" >Origen de luz</text>
<rect x="104.5" y="367.1" width="9" height="9" fill="#fff" stroke="#333" stroke-width="0.9"/>
<path d="M1 377.85H200.5" stroke="#9a9a9a" stroke-width="0.8" stroke-dasharray="1.5 1.5"/>
<path d="M101 364.6V378.35 M200.5 364.6V378.35" stroke="#9a9a9a" stroke-width="0.8" stroke-dasharray="1.5 1.5"/>
<text x="7" y="387.45000000000005" font-size="9.5" fill="#222" stroke="#222" stroke-width="0.12" text-anchor="start" font-weight="normal" letter-spacing="-0.25" >Mantener orientació...</text>
<rect x="104.5" y="380.85" width="9" height="9" fill="#fff" stroke="#333" stroke-width="0.9"/>
<path d="M1 391.6H200.5" stroke="#9a9a9a" stroke-width="0.8" stroke-dasharray="1.5 1.5"/>
<path d="M101 378.35V392.1 M200.5 378.35V392.1" stroke="#9a9a9a" stroke-width="0.8" stroke-dasharray="1.5 1.5"/>
<text x="7" y="401.20000000000005" font-size="9.5" fill="#222" stroke="#222" stroke-width="0.12" text-anchor="start" font-weight="normal" letter-spacing="-0.25" >Compartido</text>
<rect x="104.5" y="394.6" width="9" height="9" fill="#fff" stroke="#333" stroke-width="0.9"/>
<path d="M1 405.35H200.5" stroke="#9a9a9a" stroke-width="0.8" stroke-dasharray="1.5 1.5"/>
<path d="M101 392.1V405.85 M200.5 392.1V405.85" stroke="#9a9a9a" stroke-width="0.8" stroke-dasharray="1.5 1.5"/>
<text x="7" y="414.95000000000005" font-size="9.5" fill="#222" stroke="#222" stroke-width="0.12" text-anchor="start" font-weight="normal" letter-spacing="-0.25" >Punto de cálculo de...</text>
<rect x="104.5" y="408.35" width="9" height="9" fill="#fff" stroke="#333" stroke-width="0.9"/>
<path d="M1 419.1H200.5" stroke="#9a9a9a" stroke-width="0.8" stroke-dasharray="1.5 1.5"/>
<path d="M101 405.85V419.6 M200.5 405.85V419.6" stroke="#9a9a9a" stroke-width="0.8" stroke-dasharray="1.5 1.5"/>
</g>
<rect x="201" y="199.6" width="13" height="211.5" fill="#ececec" />
<rect x="202.5" y="213" width="10.5" height="160" fill="#c3c3c3" />
<path d="M205 208.5 L207.7 205.8 L210.4 208.5" fill="none" stroke="#333" stroke-width="1.1"/>
<path d="M205 402.5 L207.7 405.2 L210.4 402.5" fill="none" stroke="#333" stroke-width="1.1"/>
<rect x="0" y="411" width="216" height="21" fill="#f0f0f0" />
<text x="2.5" y="423" font-size="9.5" fill="#1f6fbf" stroke="#1f6fbf" stroke-width="0.12" text-anchor="start" font-weight="normal" letter-spacing="-0.25" >Ayuda de propiedades</text>
<line x1="2.5" y1="424.8" x2="92" y2="424.8" stroke="#1f6fbf" stroke-width="0.8" />
<rect x="157" y="412.3" width="55.5" height="15.5" fill="#cccccc" />
<text x="184.7" y="423.5" font-size="9.5" fill="#9a9a9a" stroke="#9a9a9a" stroke-width="0.12" text-anchor="middle" font-weight="normal" letter-spacing="-0.25" >Aplicar</text>
<line x1="0" y1="431.5" x2="216" y2="431.5" stroke="#d4d4d4" stroke-width="1" />
<rect x="0" y="432" width="216" height="321" fill="#ffffff" />
<rect x="0" y="432" width="216" height="16" fill="#eeeeee" />
<text x="3" y="444.4" font-size="9.5" fill="#333" stroke="#333" stroke-width="0.12" text-anchor="start" font-weight="normal" letter-spacing="-0.25" >Navegador de proyectos - familia riel.rfa</text>
<path d="M204.4 437.4L211.6 444.6M211.6 437.4L204.4 444.6" stroke="#222" stroke-width="1.3"/>
<rect x="30.7" y="449" width="54" height="12.2" fill="#e2e2e2" />
<path d="M7.5 461V634" stroke="#a8a8a8" stroke-width="1" stroke-dasharray="1 1"/>
<path d="M22.5 461V552 M22.5 640V745" stroke="#a8a8a8" stroke-width="1" stroke-dasharray="1 1"/>
<path d="M37.5 475V483 M37.5 502V511 M37.5 530V538 M37.5 558V607 M37.5 654V662 M37.5 709V731" stroke="#a8a8a8" stroke-width="1" stroke-dasharray="1 1"/>
<rect x="4.5" y="452.5" width="6" height="6" fill="#f4f4f4" stroke="#a5a5a5" stroke-width="1"/>
<path d="M6 455.5H9" stroke="#555" stroke-width="1"/>
<g stroke="#333" stroke-width="0.9" fill="none"><path d="M17 452.5V450.5H19 M25 450.5H27V452.5 M27 458.5V460.5H25 M19 460.5H17V458.5"/><rect x="19.5" y="453.0" width="5" height="5" rx="1"/></g>
<text x="33" y="458.4" font-size="9.5" fill="#222" stroke="#222" stroke-width="0.12" text-anchor="start" font-weight="normal" letter-spacing="-0.25" >Vistas (todo)</text>
<path d="M25 469.5H34" stroke="#a8a8a8" stroke-width="1" stroke-dasharray="1 1"/>
<rect x="19.5" y="466.5" width="6" height="6" fill="#f4f4f4" stroke="#a5a5a5" stroke-width="1"/>
<path d="M21 469.5H24" stroke="#555" stroke-width="1"/>
<text x="36" y="472.13" font-size="9.5" fill="#222" stroke="#222" stroke-width="0.12" text-anchor="start" font-weight="normal" letter-spacing="-0.25" >Planos de planta</text>
<path d="M37 482.5H49" stroke="#a8a8a8" stroke-width="1" stroke-dasharray="1 1"/>
<text x="51.5" y="485.85999999999996" font-size="9.5" fill="#222" stroke="#222" stroke-width="0.12" text-anchor="start" font-weight="normal" letter-spacing="-0.25" >Nivel de referencia</text>
<path d="M25 496.5H34" stroke="#a8a8a8" stroke-width="1" stroke-dasharray="1 1"/>
<rect x="19.5" y="493.5" width="6" height="6" fill="#f4f4f4" stroke="#a5a5a5" stroke-width="1"/>
<path d="M21 496.5H24" stroke="#555" stroke-width="1"/>
<text x="36" y="499.59" font-size="9.5" fill="#222" stroke="#222" stroke-width="0.12" text-anchor="start" font-weight="normal" letter-spacing="-0.25" >Planos de techo</text>
<path d="M37 510.5H49" stroke="#a8a8a8" stroke-width="1" stroke-dasharray="1 1"/>
<text x="51.5" y="513.3199999999999" font-size="9.5" fill="#222" stroke="#222" stroke-width="0.12" text-anchor="start" font-weight="normal" letter-spacing="-0.25" >Nivel de referencia</text>
<path d="M25 524.5H34" stroke="#a8a8a8" stroke-width="1" stroke-dasharray="1 1"/>
<rect x="19.5" y="521.5" width="6" height="6" fill="#f4f4f4" stroke="#a5a5a5" stroke-width="1"/>
<path d="M21 524.5H24" stroke="#555" stroke-width="1"/>
<text x="36" y="527.05" font-size="9.5" fill="#222" stroke="#222" stroke-width="0.12" text-anchor="start" font-weight="normal" letter-spacing="-0.25" >Vistas 3D</text>
<path d="M37 537.5H49" stroke="#a8a8a8" stroke-width="1" stroke-dasharray="1 1"/>
<text x="51.5" y="540.78" font-size="9.5" fill="#222" stroke="#222" stroke-width="0" text-anchor="start" font-weight="bold" letter-spacing="-0.1" >Vista 1</text>
<path d="M25 551.5H34" stroke="#a8a8a8" stroke-width="1" stroke-dasharray="1 1"/>
<rect x="19.5" y="548.5" width="6" height="6" fill="#f4f4f4" stroke="#a5a5a5" stroke-width="1"/>
<path d="M21 551.5H24" stroke="#555" stroke-width="1"/>
<text x="36" y="554.51" font-size="9.5" fill="#222" stroke="#222" stroke-width="0.12" text-anchor="start" font-weight="normal" letter-spacing="-0.25" >Alzados (Alzado 1)</text>
<path d="M37 565.5H49" stroke="#a8a8a8" stroke-width="1" stroke-dasharray="1 1"/>
<text x="51.5" y="568.24" font-size="9.5" fill="#222" stroke="#222" stroke-width="0.12" text-anchor="start" font-weight="normal" letter-spacing="-0.25" >Derecha</text>
<path d="M37 578.5H49" stroke="#a8a8a8" stroke-width="1" stroke-dasharray="1 1"/>
<text x="51.5" y="581.97" font-size="9.5" fill="#222" stroke="#222" stroke-width="0.12" text-anchor="start" font-weight="normal" letter-spacing="-0.25" >Frontal</text>
<path d="M37 592.5H49" stroke="#a8a8a8" stroke-width="1" stroke-dasharray="1 1"/>
<text x="51.5" y="595.7" font-size="9.5" fill="#222" stroke="#222" stroke-width="0.12" text-anchor="start" font-weight="normal" letter-spacing="-0.25" >Izquierda</text>
<path d="M37 606.5H49" stroke="#a8a8a8" stroke-width="1" stroke-dasharray="1 1"/>
<text x="51.5" y="609.43" font-size="9.5" fill="#222" stroke="#222" stroke-width="0.12" text-anchor="start" font-weight="normal" letter-spacing="-0.25" >Posterior</text>
<path d="M7 620.5H15" stroke="#a8a8a8" stroke-width="1" stroke-dasharray="1 1"/>
<g stroke="#444" stroke-width="0.9" fill="#f4f4f4"><rect x="16.5" y="615.0" width="11.5" height="11"/><path d="M18.5 618.0H25 M18.5 621.0H22 M18.5 623.5H22 M23 620.5H26V624.0" fill="none" stroke-width="0.7"/></g>
<text x="33" y="623.16" font-size="9.5" fill="#222" stroke="#222" stroke-width="0.12" text-anchor="start" font-weight="normal" letter-spacing="-0.25" >Planos (todo)</text>
<rect x="4.5" y="630.5" width="6" height="6" fill="#f4f4f4" stroke="#a5a5a5" stroke-width="1"/>
<path d="M6 633.5H9" stroke="#555" stroke-width="1"/>
<g stroke="#444" stroke-width="0.9" fill="#f4f4f4"><rect x="16.5" y="628.0" width="11.5" height="11"/><path d="M19 628.0V634.5H23V628.0" fill="none"/><path d="M18 636.5H26" fill="none" stroke-width="0.7"/></g>
<text x="33" y="636.89" font-size="9.5" fill="#222" stroke="#222" stroke-width="0.12" text-anchor="start" font-weight="normal" letter-spacing="-0.25" >Familias</text>
<path d="M25 647.5H34" stroke="#a8a8a8" stroke-width="1" stroke-dasharray="1 1"/>
<rect x="19.5" y="644.5" width="6" height="6" fill="#f4f4f4" stroke="#a5a5a5" stroke-width="1"/>
<path d="M21 647.5H24" stroke="#555" stroke-width="1"/>
<text x="36" y="650.62" font-size="9.5" fill="#222" stroke="#222" stroke-width="0.12" text-anchor="start" font-weight="normal" letter-spacing="-0.25" >Luminarias</text>
<path d="M40 661.5H49" stroke="#a8a8a8" stroke-width="1" stroke-dasharray="1 1"/>
<rect x="34.5" y="658.5" width="6" height="6" fill="#f4f4f4" stroke="#a5a5a5" stroke-width="1"/>
<path d="M36 661.5H39" stroke="#555" stroke-width="1"/>
<path d="M37.5 660.0V663.0" stroke="#555" stroke-width="1"/>
<text x="51.5" y="664.35" font-size="9.5" fill="#222" stroke="#222" stroke-width="0.12" text-anchor="start" font-weight="normal" letter-spacing="-0.25" >foco</text>
<path d="M25 675.5H34" stroke="#a8a8a8" stroke-width="1" stroke-dasharray="1 1"/>
<rect x="19.5" y="672.5" width="6" height="6" fill="#f4f4f4" stroke="#a5a5a5" stroke-width="1"/>
<path d="M21 675.5H24" stroke="#555" stroke-width="1"/>
<path d="M22.5 674.0V677.0" stroke="#555" stroke-width="1"/>
<text x="36" y="678.0799999999999" font-size="9.5" fill="#222" stroke="#222" stroke-width="0.12" text-anchor="start" font-weight="normal" letter-spacing="-0.25" >Muros</text>
<path d="M25 688.5H34" stroke="#a8a8a8" stroke-width="1" stroke-dasharray="1 1"/>
<rect x="19.5" y="685.5" width="6" height="6" fill="#f4f4f4" stroke="#a5a5a5" stroke-width="1"/>
<path d="M21 688.5H24" stroke="#555" stroke-width="1"/>
<path d="M22.5 687.0V690.0" stroke="#555" stroke-width="1"/>
<text x="36" y="691.81" font-size="9.5" fill="#222" stroke="#222" stroke-width="0.12" text-anchor="start" font-weight="normal" letter-spacing="-0.25" >Símbolos de anotación</text>
<path d="M25 702.5H34" stroke="#a8a8a8" stroke-width="1" stroke-dasharray="1 1"/>
<rect x="19.5" y="699.5" width="6" height="6" fill="#f4f4f4" stroke="#a5a5a5" stroke-width="1"/>
<path d="M21 702.5H24" stroke="#555" stroke-width="1"/>
<text x="36" y="705.54" font-size="9.5" fill="#222" stroke="#222" stroke-width="0.12" text-anchor="start" font-weight="normal" letter-spacing="-0.25" >Techos</text>
<path d="M40 716.5H49" stroke="#a8a8a8" stroke-width="1" stroke-dasharray="1 1"/>
<rect x="34.5" y="713.5" width="6" height="6" fill="#f4f4f4" stroke="#a5a5a5" stroke-width="1"/>
<path d="M36 716.5H39" stroke="#555" stroke-width="1"/>
<path d="M37.5 715.0V718.0" stroke="#555" stroke-width="1"/>
<text x="51.5" y="719.27" font-size="9.5" fill="#222" stroke="#222" stroke-width="0.12" text-anchor="start" font-weight="normal" letter-spacing="-0.25" >Techo básico</text>
<path d="M40 730.5H49" stroke="#a8a8a8" stroke-width="1" stroke-dasharray="1 1"/>
<rect x="34.5" y="727.5" width="6" height="6" fill="#f4f4f4" stroke="#a5a5a5" stroke-width="1"/>
<path d="M36 730.5H39" stroke="#555" stroke-width="1"/>
<path d="M37.5 729.0V732.0" stroke="#555" stroke-width="1"/>
<text x="51.5" y="733.0" font-size="9.5" fill="#222" stroke="#222" stroke-width="0.12" text-anchor="start" font-weight="normal" letter-spacing="-0.25" >Techo compuesto</text>
<path d="M25 743.5H34" stroke="#a8a8a8" stroke-width="1" stroke-dasharray="1 1"/>
<rect x="19.5" y="740.5" width="6" height="6" fill="#f4f4f4" stroke="#a5a5a5" stroke-width="1"/>
<path d="M21 743.5H24" stroke="#555" stroke-width="1"/>
<path d="M22.5 742.0V745.0" stroke="#555" stroke-width="1"/>
<text x="36" y="746.73" font-size="9.5" fill="#222" stroke="#222" stroke-width="0.12" text-anchor="start" font-weight="normal" letter-spacing="-0.25" >Vínculos analíticos</text>
<rect x="201" y="448" width="13" height="305" fill="#f0f0f0" />
<rect x="202.5" y="462" width="10.5" height="256" fill="#c3c3c3" />
<path d="M205 457.5 L207.7 454.8 L210.4 457.5" fill="none" stroke="#333" stroke-width="1.1"/>
<path d="M205 744.5 L207.7 747.2 L210.4 744.5" fill="none" stroke="#333" stroke-width="1.1"/>
<g stroke="#666" stroke-width="0.8" fill="#e4e4e4"><rect x="221" y="113.2" width="11" height="8.8"/><path d="M221 115.5H232M221 117.7H232M221 119.8H232M224 115.5V122" fill="none" stroke="#888" stroke-width="0.6"/></g>
<g stroke="#777" stroke-width="0.8" fill="#dcdcdc"><rect x="404" y="113" width="7" height="8"/><rect x="407" y="115" width="7.5" height="8" fill="#e8e8e8"/></g>
<g stroke="#333" stroke-width="0.9" stroke-linejoin="round"><path d="M502.5 116 L508 112.5 L513.5 116 L508 119 Z" fill="#ddd"/><path d="M502.5 116 L502.5 121 L508 124 L508 119 Z" fill="#bbb"/><path d="M508 119 L508 124 L513.5 121 L513.5 116 Z" fill="#eee"/></g>
<path d="M584.2 114.2L590.8 120.8M590.8 114.2L584.2 120.8" stroke="#222" stroke-width="1.2"/>
<line x1="216" y1="108.5" x2="1140" y2="108.5" stroke="#c0c0c0" stroke-width="1" />
<g stroke-width="0.8"><rect x="279.5" y="740.5" width="11" height="8.5" fill="#dadada" stroke="#444"/><path d="M281 742.5H289M281 744.7H289M281 747H289M282.5 741V749M285 741V749M287.5 741V749" stroke="#999" stroke-width="0.6" stroke-dasharray="1 1"/><path d="M295.5 743 L298 740.5 L306.5 740.5 L306.5 746.5 L304 749 L295.5 749 Z" fill="#8cc4ea" stroke="#2d72b8"/><path d="M295.5 743H304L306.5 740.5M304 743V749" fill="none" stroke="#2d72b8"/><path d="M311 748 L311 743.5 L314 743.5 L314 741 L322 741 L322 746 L318 746 L318 749" fill="#7fb2e0" stroke="#2f5f99"/><rect x="316.5" y="745" width="5" height="3.5" fill="#d9443a" stroke="none"/><path d="M326.5 748 L326.5 743.5 L329.5 743.5 L329.5 741 L334 741 L334 749" fill="#7fb2e0" stroke="#2f5f99"/><circle cx="336" cy="744" r="2.3" fill="#fff" stroke="#2f5f99"/><path d="M342.5 745 L348 740.5 L354 745 L354 749 L343.5 749 Z" fill="#eee" stroke="#444"/><rect x="348.5" y="745.5" width="5" height="3.5" fill="#5a9e6b" stroke="#335"/><path d="M358.5 744 Q361 747 363 744 Q365 741 368 743 Q371 745 369 747" fill="none" stroke="#333" stroke-width="1"/><path d="M374.5 741V749M386.5 741V749M374.5 741.5H386.5" fill="none" stroke="#333" stroke-dasharray="1 0.8"/><rect x="380" y="745" width="5.5" height="4" rx="1" fill="#444"/><rect x="390" y="741" width="10" height="6" fill="#e8e8e8" stroke="#444"/><path d="M390 749H401" stroke="#444"/><circle cx="400" cy="745.5" r="2" fill="#cde" stroke="#2f5f99" stroke-width="0.6"/></g>
<path d="M413 742.5 L410.3 745 L413 747.5" fill="none" stroke="#222" stroke-width="1.1"/>
<rect x="923" y="741" width="12" height="11" fill="#cbcbcb" />
<defs><clipPath id="vc"><rect x="217" y="125" width="923" height="559"/></clipPath></defs>
<polygon points="775,148.5 1030.5,295.5 776,443 519,296" fill="#808080" stroke="#2e2e2e" stroke-width="1"/>
<polygon points="582,406.6 962.4,187 965.2,188.6 965.2,191.4 584.2,411.1 582,409.6" fill="#717171"/>
<path d="M639.5 377.3 V393.0 A13 6.6 0 0 0 665.5 393.0 V377.3 A13 6.6 0 0 0 639.5 377.3 Z" fill="#878787"/>
<path d="M761.4 306.8 V322.5 A13 6.6 0 0 0 787.4 322.5 V306.8 A13 6.6 0 0 0 761.4 306.8 Z" fill="#878787"/>
<path d="M883.2 236.3 V252.0 A13 6.6 0 0 0 909.2 252.0 V236.3 A13 6.6 0 0 0 883.2 236.3 Z" fill="#878787"/>
<polygon points="582,406.6 962.4,187 965.2,188.6 965.2,191.4 584.2,411.1 582,409.6" fill="none" stroke="#262626" stroke-width="0.8"/>
<line x1="582" y1="409.6" x2="962.4" y2="190" stroke="#3a3a3a" stroke-width="0.5"/>
<path d="M639.5 377.3 V393.0 A13 6.6 0 0 0 665.5 393.0 V377.3 A13 6.6 0 0 0 639.5 377.3 Z" fill="none" stroke="#000" stroke-width="1"/>
<path d="M639.5 393.0 A13 6.6 0 0 1 665.5 393.0" fill="none" stroke="#000" stroke-width="0.9"/>
<path d="M761.4 306.8 V322.5 A13 6.6 0 0 0 787.4 322.5 V306.8 A13 6.6 0 0 0 761.4 306.8 Z" fill="none" stroke="#000" stroke-width="1"/>
<path d="M761.4 322.5 A13 6.6 0 0 1 787.4 322.5" fill="none" stroke="#000" stroke-width="0.9"/>
<path d="M883.2 236.3 V252.0 A13 6.6 0 0 0 909.2 252.0 V236.3 A13 6.6 0 0 0 883.2 236.3 Z" fill="none" stroke="#000" stroke-width="1"/>
<path d="M883.2 252.0 A13 6.6 0 0 1 909.2 252.0" fill="none" stroke="#000" stroke-width="0.9"/>
<g clip-path="url(#vc)">
<path d="M652.5 394.5 L308.7 534.9 L307.4 535.5 L306.2 536.1 L305.1 536.7 L304.0 537.4 L303.0 538.1 L302.1 538.8 L301.3 539.5 L300.5 540.3 L299.8 541.1 L299.2 542.0 L298.7 542.9 L298.2 543.8 L297.9 544.8 L297.6 545.7 L297.3 546.7 L297.2 547.8 L297.2 548.9 L297.2 550.0 L297.3 551.1 L297.5 552.2 L297.7 553.4 L298.1 554.6 L298.5 555.9 L299.0 557.1 L299.6 558.4 L300.2 559.8 L300.9 561.1 L301.7 562.5 L302.6 563.9 L303.6 565.3 L304.6 566.7 L305.8 568.2 L307.0 569.7 L308.2 571.2 L309.6 572.8 L311.0 574.3 L312.5 575.9 L314.1 577.5 L315.7 579.1 L317.4 580.8 L319.2 582.4 L321.1 584.1 L323.0 585.8 L325.0 587.5 L327.1 589.3 L329.2 591.0 L331.4 592.8 L333.7 594.6 L336.1 596.4 L338.5 598.2 L341.0 600.1 L343.5 601.9 L346.1 603.8 L348.8 605.6 L351.6 607.5 L354.4 609.4 L357.2 611.3 L360.2 613.2 L363.1 615.2 L366.2 617.1 L369.3 619.0 L372.4 621.0 L375.7 623.0 L378.9 624.9 L382.3 626.9 L385.6 628.9 L389.1 630.9 L392.5 632.8 L396.1 634.8 L399.7 636.8 L403.3 638.8 L407.0 640.8 L410.7 642.8 L414.4 644.8 L418.3 646.8 L422.1 648.8 L426.0 650.8 L429.9 652.8 L433.9 654.8 L437.9 656.8 L441.9 658.8 L446.0 660.8 L450.1 662.8 L454.3 664.8 L458.4 666.7 L462.6 668.7 L466.9 670.6 L471.1 672.6 L475.4 674.5 L479.7 676.5 L484.1 678.4 L488.4 680.3 L492.8 682.2 L497.2 684.1 L501.6 686.0 L506.0 687.8 L510.5 689.7 L514.9 691.5 L519.4 693.3 L523.9 695.1 L528.4 696.9 L532.9 698.7 L537.4 700.5 L541.9 702.2 L546.4 704.0 L551.0 705.7 L555.5 707.4 L560.0 709.0 L564.5 710.7 L569.1 712.3 L573.6 713.9 L578.1 715.5 L582.6 717.1 L587.1 718.6 L591.6 720.2 L596.1 721.7 L600.5 723.2 L605.0 724.6 L609.4 726.0 L613.8 727.5 L618.2 728.8 L622.6 730.2 L627.0 731.5 L631.3 732.8 L635.6 734.1 L639.9 735.4 L644.2 736.6 L648.4 737.8 L652.7 739.0 L656.9 740.1 L661.0 741.2 L665.1 742.3 L669.2 743.3 L673.3 744.4 L677.3 745.4 L681.3 746.3 L685.2 747.3 L689.1 748.1 L693.0 749.0 L696.8 749.9 L700.6 750.7 L704.3 751.4 L708.0 752.2 L711.7 752.9 L715.3 753.6 L718.8 754.2 L722.3 754.8 L725.8 755.4 L729.2 755.9 L732.5 756.4 L735.8 756.9 L739.1 757.4 L742.2 757.8 L745.4 758.1 L748.4 758.5 L751.4 758.8 L754.4 759.0 L757.3 759.3 L760.1 759.5 L762.9 759.6 L765.6 759.8 L768.2 759.9 L770.8 759.9 L773.3 759.9 L775.8 759.9 L778.1 759.9 L780.4 759.8 L782.7 759.7 L784.9 759.6 L787.0 759.4 L789.0 759.1 L791.0 758.9 L792.8 758.6 L794.7 758.3 L796.4 757.9 L798.1 757.5 L799.7 757.1 L801.2 756.6 L802.7 756.2 L804.0 755.6 L805.3 755.1 L806.6 754.5 L807.7 753.8 L808.8 753.2 L809.8 752.5 L810.7 751.8 L811.5 751.0 L812.3 750.2 L813.0 749.4 L813.6 748.5 L814.1 747.6 L814.6 746.7 L814.9 745.8 L815.2 744.8 L815.4 743.8 L815.6 742.8 L815.6 741.7 L815.6 740.6 L815.5 739.5 L815.3 738.3 L815.1 737.1 L814.7 735.9 L814.3 734.7 L813.8 733.4 L813.2 732.1 L813.2 732.1 Z" fill="#ffff00" fill-opacity="0.28"/>
<path d="M652.5 394.5 L489.8 615.3 L489.6 615.5 L489.5 615.7 L489.4 616.0 L489.3 616.2 L489.2 616.5 L489.1 616.7 L489.1 617.0 L489.1 617.3 L489.1 617.6 L489.1 617.9 L489.2 618.2 L489.2 618.5 L489.3 618.8 L489.4 619.1 L489.6 619.4 L489.7 619.8 L489.9 620.1 L490.1 620.5 L490.3 620.8 L490.5 621.2 L490.8 621.6 L491.1 621.9 L491.3 622.3 L491.7 622.7 L492.0 623.1 L492.3 623.5 L492.7 623.9 L493.1 624.3 L493.5 624.7 L494.0 625.2 L494.4 625.6 L494.9 626.0 L495.4 626.5 L495.9 626.9 L496.4 627.4 L496.9 627.8 L497.5 628.3 L498.1 628.7 L498.7 629.2 L499.3 629.7 L499.9 630.1 L500.6 630.6 L501.2 631.1 L501.9 631.6 L502.6 632.1 L503.3 632.6 L504.1 633.1 L504.8 633.5 L505.6 634.0 L506.4 634.5 L507.2 635.1 L508.0 635.6 L508.8 636.1 L509.7 636.6 L510.5 637.1 L511.4 637.6 L512.3 638.1 L513.2 638.6 L514.1 639.1 L515.0 639.7 L515.9 640.2 L516.9 640.7 L517.8 641.2 L518.8 641.7 L519.8 642.3 L520.8 642.8 L521.8 643.3 L522.8 643.8 L523.9 644.3 L524.9 644.9 L525.9 645.4 L527.0 645.9 L528.1 646.4 L529.1 646.9 L530.2 647.4 L531.3 648.0 L532.4 648.5 L533.5 649.0 L534.6 649.5 L535.8 650.0 L536.9 650.5 L538.0 651.0 L539.2 651.5 L540.3 652.0 L541.5 652.5 L542.6 653.0 L543.8 653.4 L544.9 653.9 L546.1 654.4 L547.3 654.9 L548.5 655.3 L549.6 655.8 L550.8 656.3 L552.0 656.7 L553.2 657.2 L554.3 657.6 L555.5 658.1 L556.7 658.5 L557.9 658.9 L559.1 659.4 L560.3 659.8 L561.4 660.2 L562.6 660.6 L563.8 661.0 L565.0 661.4 L566.2 661.8 L567.3 662.2 L568.5 662.6 L569.7 663.0 L570.8 663.4 L572.0 663.7 L573.1 664.1 L574.3 664.4 L575.4 664.8 L576.6 665.1 L577.7 665.4 L578.8 665.8 L579.9 666.1 L581.0 666.4 L582.1 666.7 L583.2 667.0 L584.3 667.3 L585.4 667.6 L586.5 667.8 L587.5 668.1 L588.6 668.4 L589.6 668.6 L590.6 668.8 L591.7 669.1 L592.7 669.3 L593.7 669.5 L594.7 669.7 L595.6 669.9 L596.6 670.1 L597.6 670.3 L598.5 670.5 L599.4 670.6 L600.3 670.8 L601.3 670.9 L602.1 671.1 L603.0 671.2 L603.9 671.3 L604.7 671.5 L605.6 671.6 L606.4 671.7 L607.2 671.7 L608.0 671.8 L608.7 671.9 L609.5 671.9 L610.2 672.0 L610.9 672.0 L611.7 672.1 L612.3 672.1 L613.0 672.1 L613.7 672.1 L614.3 672.1 L614.9 672.1 L615.5 672.1 L616.1 672.0 L616.7 672.0 L617.2 672.0 L617.8 671.9 L618.3 671.8 L618.8 671.8 L619.3 671.7 L619.7 671.6 L620.1 671.5 L620.6 671.4 L621.0 671.2 L621.3 671.1 L621.7 671.0 L622.0 670.8 L622.4 670.7 L622.7 670.5 L622.9 670.3 L623.2 670.1 L623.4 670.0 L623.7 669.8 L623.9 669.6 L624.0 669.3 L624.2 669.1 L624.3 668.9 L624.4 668.6 L624.5 668.4 L624.6 668.1 L624.7 667.9 L624.7 667.6 L624.7 667.6 Z" fill="#ffff00" fill-opacity="0.28"/>
<path d="M774.4 324.0 L430.6 464.4 L429.3 465.0 L428.1 465.6 L426.9 466.2 L425.9 466.9 L424.9 467.6 L423.9 468.3 L423.1 469.0 L422.3 469.8 L421.7 470.6 L421.0 471.5 L420.5 472.4 L420.1 473.3 L419.7 474.3 L419.4 475.2 L419.2 476.2 L419.1 477.3 L419.0 478.4 L419.0 479.5 L419.1 480.6 L419.3 481.7 L419.6 482.9 L419.9 484.1 L420.3 485.4 L420.8 486.6 L421.4 487.9 L422.1 489.3 L422.8 490.6 L423.6 492.0 L424.5 493.4 L425.4 494.8 L426.5 496.2 L427.6 497.7 L428.8 499.2 L430.1 500.7 L431.4 502.3 L432.8 503.8 L434.3 505.4 L435.9 507.0 L437.5 508.6 L439.3 510.3 L441.1 511.9 L442.9 513.6 L444.8 515.3 L446.9 517.0 L448.9 518.8 L451.1 520.5 L453.3 522.3 L455.6 524.1 L457.9 525.9 L460.3 527.7 L462.8 529.6 L465.4 531.4 L468.0 533.3 L470.7 535.1 L473.4 537.0 L476.2 538.9 L479.1 540.8 L482.0 542.7 L485.0 544.7 L488.0 546.6 L491.1 548.5 L494.3 550.5 L497.5 552.5 L500.8 554.4 L504.1 556.4 L507.5 558.4 L510.9 560.4 L514.4 562.3 L517.9 564.3 L521.5 566.3 L525.1 568.3 L528.8 570.3 L532.5 572.3 L536.3 574.3 L540.1 576.3 L544.0 578.3 L547.8 580.3 L551.8 582.3 L555.7 584.3 L559.7 586.3 L563.8 588.3 L567.9 590.3 L572.0 592.3 L576.1 594.3 L580.3 596.2 L584.5 598.2 L588.7 600.1 L593.0 602.1 L597.3 604.0 L601.6 606.0 L605.9 607.9 L610.3 609.8 L614.7 611.7 L619.0 613.6 L623.5 615.5 L627.9 617.3 L632.3 619.2 L636.8 621.0 L641.3 622.8 L645.8 624.6 L650.2 626.4 L654.7 628.2 L659.3 630.0 L663.8 631.7 L668.3 633.5 L672.8 635.2 L677.3 636.9 L681.9 638.5 L686.4 640.2 L690.9 641.8 L695.4 643.4 L699.9 645.0 L704.4 646.6 L708.9 648.1 L713.4 649.7 L717.9 651.2 L722.4 652.7 L726.8 654.1 L731.3 655.5 L735.7 657.0 L740.1 658.3 L744.5 659.7 L748.8 661.0 L753.2 662.3 L757.5 663.6 L761.8 664.9 L766.1 666.1 L770.3 667.3 L774.5 668.5 L778.7 669.6 L782.9 670.7 L787.0 671.8 L791.1 672.8 L795.1 673.9 L799.1 674.9 L803.1 675.8 L807.1 676.8 L811.0 677.6 L814.8 678.5 L818.7 679.4 L822.5 680.2 L826.2 680.9 L829.9 681.7 L833.5 682.4 L837.1 683.1 L840.7 683.7 L844.2 684.3 L847.6 684.9 L851.0 685.4 L854.4 685.9 L857.7 686.4 L860.9 686.9 L864.1 687.3 L867.2 687.6 L870.3 688.0 L873.3 688.3 L876.2 688.5 L879.1 688.8 L882.0 689.0 L884.7 689.1 L887.4 689.3 L890.1 689.4 L892.6 689.4 L895.2 689.4 L897.6 689.4 L900.0 689.4 L902.3 689.3 L904.5 689.2 L906.7 689.1 L908.8 688.9 L910.8 688.6 L912.8 688.4 L914.7 688.1 L916.5 687.8 L918.3 687.4 L919.9 687.0 L921.5 686.6 L923.1 686.1 L924.5 685.7 L925.9 685.1 L927.2 684.6 L928.4 684.0 L929.6 683.3 L930.6 682.7 L931.6 682.0 L932.5 681.3 L933.4 680.5 L934.1 679.7 L934.8 678.9 L935.4 678.0 L936.0 677.1 L936.4 676.2 L936.8 675.3 L937.1 674.3 L937.3 673.3 L937.4 672.3 L937.5 671.2 L937.4 670.1 L937.3 669.0 L937.2 667.8 L936.9 666.6 L936.6 665.4 L936.1 664.2 L935.7 662.9 L935.1 661.6 L935.1 661.6 Z" fill="#ffff00" fill-opacity="0.28"/>
<path d="M774.4 324.0 L611.6 544.8 L611.5 545.0 L611.3 545.2 L611.2 545.5 L611.1 545.7 L611.0 546.0 L611.0 546.2 L610.9 546.5 L610.9 546.8 L610.9 547.1 L611.0 547.4 L611.0 547.7 L611.1 548.0 L611.2 548.3 L611.3 548.6 L611.4 548.9 L611.6 549.3 L611.7 549.6 L611.9 550.0 L612.1 550.3 L612.4 550.7 L612.6 551.1 L612.9 551.4 L613.2 551.8 L613.5 552.2 L613.8 552.6 L614.2 553.0 L614.6 553.4 L615.0 553.8 L615.4 554.2 L615.8 554.7 L616.3 555.1 L616.7 555.5 L617.2 556.0 L617.7 556.4 L618.2 556.9 L618.8 557.3 L619.3 557.8 L619.9 558.2 L620.5 558.7 L621.1 559.2 L621.8 559.6 L622.4 560.1 L623.1 560.6 L623.8 561.1 L624.5 561.6 L625.2 562.1 L625.9 562.6 L626.7 563.0 L627.4 563.5 L628.2 564.0 L629.0 564.6 L629.8 565.1 L630.7 565.6 L631.5 566.1 L632.4 566.6 L633.2 567.1 L634.1 567.6 L635.0 568.1 L635.9 568.6 L636.9 569.2 L637.8 569.7 L638.7 570.2 L639.7 570.7 L640.7 571.2 L641.7 571.8 L642.7 572.3 L643.7 572.8 L644.7 573.3 L645.7 573.8 L646.7 574.4 L647.8 574.9 L648.9 575.4 L649.9 575.9 L651.0 576.4 L652.1 576.9 L653.2 577.5 L654.3 578.0 L655.4 578.5 L656.5 579.0 L657.6 579.5 L658.7 580.0 L659.9 580.5 L661.0 581.0 L662.2 581.5 L663.3 582.0 L664.5 582.5 L665.6 582.9 L666.8 583.4 L668.0 583.9 L669.1 584.4 L670.3 584.8 L671.5 585.3 L672.7 585.8 L673.8 586.2 L675.0 586.7 L676.2 587.1 L677.4 587.6 L678.6 588.0 L679.7 588.4 L680.9 588.9 L682.1 589.3 L683.3 589.7 L684.5 590.1 L685.7 590.5 L686.8 590.9 L688.0 591.3 L689.2 591.7 L690.3 592.1 L691.5 592.5 L692.7 592.9 L693.8 593.2 L695.0 593.6 L696.1 593.9 L697.3 594.3 L698.4 594.6 L699.5 594.9 L700.7 595.3 L701.8 595.6 L702.9 595.9 L704.0 596.2 L705.1 596.5 L706.2 596.8 L707.2 597.1 L708.3 597.3 L709.4 597.6 L710.4 597.9 L711.5 598.1 L712.5 598.3 L713.5 598.6 L714.5 598.8 L715.5 599.0 L716.5 599.2 L717.5 599.4 L718.5 599.6 L719.4 599.8 L720.4 600.0 L721.3 600.1 L722.2 600.3 L723.1 600.4 L724.0 600.6 L724.9 600.7 L725.7 600.8 L726.6 601.0 L727.4 601.1 L728.2 601.2 L729.0 601.2 L729.8 601.3 L730.6 601.4 L731.3 601.4 L732.1 601.5 L732.8 601.5 L733.5 601.6 L734.2 601.6 L734.9 601.6 L735.5 601.6 L736.2 601.6 L736.8 601.6 L737.4 601.6 L738.0 601.5 L738.5 601.5 L739.1 601.5 L739.6 601.4 L740.1 601.3 L740.6 601.3 L741.1 601.2 L741.6 601.1 L742.0 601.0 L742.4 600.9 L742.8 600.7 L743.2 600.6 L743.5 600.5 L743.9 600.3 L744.2 600.2 L744.5 600.0 L744.8 599.8 L745.0 599.6 L745.3 599.5 L745.5 599.3 L745.7 599.1 L745.9 598.8 L746.0 598.6 L746.2 598.4 L746.3 598.1 L746.4 597.9 L746.5 597.6 L746.5 597.4 L746.6 597.1 L746.6 597.1 Z" fill="#ffff00" fill-opacity="0.28"/>
<path d="M896.2 253.5 L552.4 393.9 L551.1 394.5 L549.9 395.1 L548.8 395.7 L547.7 396.4 L546.7 397.1 L545.8 397.8 L545.0 398.5 L544.2 399.3 L543.5 400.1 L542.9 401.0 L542.4 401.9 L541.9 402.8 L541.6 403.8 L541.3 404.7 L541.0 405.7 L540.9 406.8 L540.9 407.9 L540.9 409.0 L541.0 410.1 L541.2 411.2 L541.4 412.4 L541.8 413.6 L542.2 414.9 L542.7 416.1 L543.3 417.4 L543.9 418.8 L544.6 420.1 L545.4 421.5 L546.3 422.9 L547.3 424.3 L548.3 425.7 L549.5 427.2 L550.7 428.7 L551.9 430.2 L553.3 431.8 L554.7 433.3 L556.2 434.9 L557.8 436.5 L559.4 438.1 L561.1 439.8 L562.9 441.4 L564.8 443.1 L566.7 444.8 L568.7 446.5 L570.8 448.3 L572.9 450.0 L575.1 451.8 L577.4 453.6 L579.8 455.4 L582.2 457.2 L584.7 459.1 L587.2 460.9 L589.8 462.8 L592.5 464.6 L595.3 466.5 L598.1 468.4 L600.9 470.3 L603.9 472.2 L606.8 474.2 L609.9 476.1 L613.0 478.0 L616.1 480.0 L619.4 482.0 L622.6 483.9 L626.0 485.9 L629.3 487.9 L632.8 489.9 L636.2 491.8 L639.8 493.8 L643.4 495.8 L647.0 497.8 L650.7 499.8 L654.4 501.8 L658.1 503.8 L662.0 505.8 L665.8 507.8 L669.7 509.8 L673.6 511.8 L677.6 513.8 L681.6 515.8 L685.6 517.8 L689.7 519.8 L693.8 521.8 L698.0 523.8 L702.1 525.7 L706.3 527.7 L710.6 529.6 L714.8 531.6 L719.1 533.5 L723.4 535.5 L727.8 537.4 L732.1 539.3 L736.5 541.2 L740.9 543.1 L745.3 545.0 L749.7 546.8 L754.2 548.7 L758.6 550.5 L763.1 552.3 L767.6 554.1 L772.1 555.9 L776.6 557.7 L781.1 559.5 L785.6 561.2 L790.1 563.0 L794.7 564.7 L799.2 566.4 L803.7 568.0 L808.2 569.7 L812.8 571.3 L817.3 572.9 L821.8 574.5 L826.3 576.1 L830.8 577.6 L835.3 579.2 L839.8 580.7 L844.2 582.2 L848.7 583.6 L853.1 585.0 L857.5 586.5 L861.9 587.8 L866.3 589.2 L870.7 590.5 L875.0 591.8 L879.3 593.1 L883.6 594.4 L887.9 595.6 L892.1 596.8 L896.4 598.0 L900.6 599.1 L904.7 600.2 L908.8 601.3 L912.9 602.3 L917.0 603.4 L921.0 604.4 L925.0 605.3 L928.9 606.3 L932.8 607.1 L936.7 608.0 L940.5 608.9 L944.3 609.7 L948.0 610.4 L951.7 611.2 L955.4 611.9 L959.0 612.6 L962.5 613.2 L966.0 613.8 L969.5 614.4 L972.9 614.9 L976.2 615.4 L979.5 615.9 L982.8 616.4 L985.9 616.8 L989.1 617.1 L992.1 617.5 L995.1 617.8 L998.1 618.0 L1001.0 618.3 L1003.8 618.5 L1006.6 618.6 L1009.3 618.8 L1011.9 618.9 L1014.5 618.9 L1017.0 618.9 L1019.5 618.9 L1021.8 618.9 L1024.1 618.8 L1026.4 618.7 L1028.6 618.6 L1030.7 618.4 L1032.7 618.1 L1034.7 617.9 L1036.5 617.6 L1038.4 617.3 L1040.1 616.9 L1041.8 616.5 L1043.4 616.1 L1044.9 615.6 L1046.4 615.2 L1047.7 614.6 L1049.0 614.1 L1050.3 613.5 L1051.4 612.8 L1052.5 612.2 L1053.5 611.5 L1054.4 610.8 L1055.2 610.0 L1056.0 609.2 L1056.7 608.4 L1057.3 607.5 L1057.8 606.6 L1058.3 605.7 L1058.6 604.8 L1058.9 603.8 L1059.1 602.8 L1059.3 601.8 L1059.3 600.7 L1059.3 599.6 L1059.2 598.5 L1059.0 597.3 L1058.8 596.1 L1058.4 594.9 L1058.0 593.7 L1057.5 592.4 L1056.9 591.1 L1056.9 591.1 Z" fill="#ffff00" fill-opacity="0.28"/>
<path d="M896.2 253.5 L733.5 474.3 L733.3 474.5 L733.2 474.7 L733.1 475.0 L733.0 475.2 L732.9 475.5 L732.8 475.7 L732.8 476.0 L732.8 476.3 L732.8 476.6 L732.8 476.9 L732.9 477.2 L732.9 477.5 L733.0 477.8 L733.1 478.1 L733.3 478.4 L733.4 478.8 L733.6 479.1 L733.8 479.5 L734.0 479.8 L734.2 480.2 L734.5 480.6 L734.8 480.9 L735.0 481.3 L735.4 481.7 L735.7 482.1 L736.0 482.5 L736.4 482.9 L736.8 483.3 L737.2 483.7 L737.7 484.2 L738.1 484.6 L738.6 485.0 L739.1 485.5 L739.6 485.9 L740.1 486.4 L740.6 486.8 L741.2 487.3 L741.8 487.7 L742.4 488.2 L743.0 488.7 L743.6 489.1 L744.3 489.6 L744.9 490.1 L745.6 490.6 L746.3 491.1 L747.0 491.6 L747.8 492.1 L748.5 492.5 L749.3 493.0 L750.1 493.5 L750.9 494.1 L751.7 494.6 L752.5 495.1 L753.4 495.6 L754.2 496.1 L755.1 496.6 L756.0 497.1 L756.9 497.6 L757.8 498.1 L758.7 498.7 L759.6 499.2 L760.6 499.7 L761.5 500.2 L762.5 500.7 L763.5 501.3 L764.5 501.8 L765.5 502.3 L766.5 502.8 L767.6 503.3 L768.6 503.9 L769.6 504.4 L770.7 504.9 L771.8 505.4 L772.8 505.9 L773.9 506.4 L775.0 507.0 L776.1 507.5 L777.2 508.0 L778.3 508.5 L779.5 509.0 L780.6 509.5 L781.7 510.0 L782.9 510.5 L784.0 511.0 L785.2 511.5 L786.3 512.0 L787.5 512.4 L788.6 512.9 L789.8 513.4 L791.0 513.9 L792.2 514.3 L793.3 514.8 L794.5 515.3 L795.7 515.7 L796.9 516.2 L798.0 516.6 L799.2 517.1 L800.4 517.5 L801.6 517.9 L802.8 518.4 L804.0 518.8 L805.1 519.2 L806.3 519.6 L807.5 520.0 L808.7 520.4 L809.9 520.8 L811.0 521.2 L812.2 521.6 L813.4 522.0 L814.5 522.4 L815.7 522.7 L816.8 523.1 L818.0 523.4 L819.1 523.8 L820.3 524.1 L821.4 524.4 L822.5 524.8 L823.6 525.1 L824.7 525.4 L825.8 525.7 L826.9 526.0 L828.0 526.3 L829.1 526.6 L830.2 526.8 L831.2 527.1 L832.3 527.4 L833.3 527.6 L834.3 527.8 L835.4 528.1 L836.4 528.3 L837.4 528.5 L838.4 528.7 L839.3 528.9 L840.3 529.1 L841.3 529.3 L842.2 529.5 L843.1 529.6 L844.0 529.8 L845.0 529.9 L845.8 530.1 L846.7 530.2 L847.6 530.3 L848.4 530.5 L849.3 530.6 L850.1 530.7 L850.9 530.7 L851.7 530.8 L852.4 530.9 L853.2 530.9 L853.9 531.0 L854.6 531.0 L855.4 531.1 L856.0 531.1 L856.7 531.1 L857.4 531.1 L858.0 531.1 L858.6 531.1 L859.2 531.1 L859.8 531.0 L860.4 531.0 L860.9 531.0 L861.5 530.9 L862.0 530.8 L862.5 530.8 L863.0 530.7 L863.4 530.6 L863.8 530.5 L864.3 530.4 L864.7 530.2 L865.0 530.1 L865.4 530.0 L865.7 529.8 L866.1 529.7 L866.4 529.5 L866.6 529.3 L866.9 529.1 L867.1 529.0 L867.4 528.8 L867.6 528.6 L867.7 528.3 L867.9 528.1 L868.0 527.9 L868.1 527.6 L868.2 527.4 L868.3 527.1 L868.4 526.9 L868.4 526.6 L868.4 526.6 Z" fill="#ffff00" fill-opacity="0.28"/>
<g stroke="#f0f000" stroke-width="0.8" stroke-opacity="0.6"><path d="M814.8 746.3 L814.3 747.2 L813.9 748.1 L813.3 749.0 L812.6 749.8 L811.9 750.6 L811.1 751.4 L810.2 752.1 L809.3 752.8 L808.2 753.5 L807.1 754.2 L806.0 754.8 L804.7 755.4 L803.4 755.9 L801.9 756.4 L800.5 756.9 L798.9 757.3 L797.3 757.7 L795.5 758.1 L793.8 758.4 L791.9 758.8 L790.0 759.0 L788.0 759.3 L785.9 759.5 L783.8 759.6 L781.6 759.8 L779.3 759.9 L777.0 759.9 L774.5 759.9 L772.1 759.9 L769.5 759.9 L766.9 759.8 L764.2 759.7 L761.5 759.6 L758.7 759.4 L755.8 759.2 L752.9 758.9 L749.9 758.6 L746.9 758.3 L743.8 757.9 L740.7 757.6 L737.4 757.1 L734.2 756.7 L730.9 756.2 L727.5 755.7 L724.1 755.1 L720.6 754.5 L717.1 753.9 L713.5 753.2 L709.9 752.5 L706.2 751.8 L702.5 751.1 L698.7 750.3 L694.9 749.4 L691.1 748.6 L687.2 747.7 L683.3 746.8 L679.3 745.8 L675.3 744.9 L671.3 743.9 L667.2 742.8 L663.1 741.8 L658.9 740.7 L654.8 739.5 L650.6 738.4 L646.3 737.2 L642.1 736.0 L637.8 734.7 L633.5 733.5 L629.2 732.2 L624.8 730.9 L620.4 729.5 L616.0 728.2 L611.6 726.8 L607.2 725.3 L602.7 723.9 L598.3 722.4 L593.8 720.9 L589.3 719.4 L584.8 717.9 L580.3 716.3 L575.8 714.7 L571.3 713.1 L566.8 711.5 L562.3 709.9 L557.8 708.2 L553.2 706.5 L548.7 704.8 L544.2 703.1 L539.7 701.4 L535.2 699.6 L530.6 697.8 L526.1 696.0 L521.7 694.2 L517.2 692.4 L512.7 690.6 L508.3 688.7 L503.8 686.9 L499.4 685.0 L495.0 683.1 L490.6 681.2 L486.2 679.3 L481.9 677.4 L477.6 675.5 L473.3 673.6 L469.0 671.6 L464.8 669.7 L460.5 667.7 L456.4 665.7 L452.2 663.8 L448.1 661.8 L444.0 659.8 L439.9 657.8 L435.9 655.8 L431.9 653.8 L428.0 651.8 L424.0 649.8 L420.2 647.8 L416.3 645.8 L412.6 643.8 L408.8 641.8 L405.1 639.8 L401.5 637.8 L397.9 635.8 L394.3 633.8 L390.8 631.9 L387.3 629.9 L383.9 627.9 L380.6 625.9 L377.3 623.9 L374.0 622.0 L370.9 620.0 L367.7 618.1 L364.7 616.1 L361.6 614.2 L358.7 612.3 L355.8 610.4 L353.0 608.5 L350.2 606.6 L347.5 604.7 L344.8 602.8 L342.2 601.0 L339.7 599.1 L337.3 597.3 L334.9 595.5 L332.6 593.7 L330.3 591.9 L328.1 590.2 L326.0 588.4 L324.0 586.7 L322.0 585.0 L320.1 583.3 L318.3 581.6 L316.5 580.0 L314.9 578.3 L313.3 576.7 L311.7 575.1 L310.3 573.5 L308.9 572.0 L307.6 570.5 L306.3 569.0 L305.2 567.5 L304.1 566.0 L303.1 564.6 L302.2 563.2 L301.3 561.8 L300.6 560.4 L299.9 559.1 L299.3 557.8 L298.7 556.5 L298.3 555.2 L297.9 554.0 L297.6 552.8 L297.4 551.7 L297.2 550.5 L297.2 549.4 L297.2 548.3 L297.3 547.3 L297.4 546.2 L297.7 545.2 L298.0 544.3 L298.4 543.3 L298.9 542.4 L299.5 541.6 L300.1 540.7 L300.9 539.9 L301.7 539.2 L302.5 538.4 L303.5 537.7 L304.5 537.0 L305.6 536.4 L306.8 535.8 L308.1 535.2 L309.4 534.6 L310.8 534.1 L312.3 533.7 L313.9 533.2 L315.5 532.8 L317.2 532.4 L319.0 532.1 L320.9 531.8 L322.8 531.5 L324.8 531.3 L326.9 531.1 L329.0 530.9 L331.2 530.8 L333.5 530.7 L335.8 530.6 L338.2 530.6 L340.7 530.6 L343.3 530.6 L345.9 530.7 L348.5 530.8 L351.3 531.0 L354.1 531.2 L356.9 531.4 L359.9 531.6 L362.8 531.9 L365.9 532.2 L369.0 532.6 L372.1 533.0 L375.3 533.4 L378.6 533.9 L381.9 534.4 L385.3 534.9 L388.7 535.4 L392.2 536.0 L395.7 536.7 L399.3 537.3 L402.9 538.0 L406.6 538.7 L410.3 539.5 L414.1 540.3 L417.9 541.1 L421.7 542.0 L425.6 542.8 L429.5 543.8 L433.5 544.7 L437.5 545.7 L441.5 546.7 L445.6 547.7 L449.7 548.8 L453.8 549.9 L458.0 551.0 L462.2 552.2 L466.4 553.3 L470.7 554.6 L475.0 555.8 L479.3 557.1 L483.6 558.4 L488.0 559.7 L492.4 561.0 L496.8 562.4 L501.2 563.8 L505.6 565.2 L510.0 566.6 L514.5 568.1 L519.0 569.6 L523.4 571.1 L527.9 572.7 L532.4 574.2 L537.0 575.8 L541.5 577.4 L546.0 579.0 L550.5 580.7 L555.0 582.3 L559.6 584.0 L564.1 585.7 L568.6 587.4 L573.1 589.2 L577.6 590.9 L582.1 592.7 L586.6 594.5 L591.1 596.3 L595.6 598.1 L600.1 599.9 L604.5 601.8 L609.0 603.6 L613.4 605.5 L617.8 607.4 L622.2 609.3 L626.5 611.2 L630.9 613.1 L635.2 615.0 L639.5 617.0 L643.8 618.9 L648.0 620.9 L652.2 622.8 L656.4 624.8 L660.6 626.8 L664.7 628.8 L668.8 630.7 L672.9 632.7 L676.9 634.7 L680.9 636.7 L684.8 638.7 L688.7 640.7 L692.6 642.7 L696.4 644.7 L700.2 646.7 L704.0 648.7 L707.7 650.7 L711.3 652.7 L714.9 654.7 L718.5 656.7 L722.0 658.7 L725.4 660.7 L728.8 662.7 L732.2 664.6 L735.5 666.6 L738.7 668.6 L741.9 670.5 L745.1 672.5 L748.1 674.4 L751.1 676.3 L754.1 678.3 L757.0 680.2 L759.8 682.1 L762.6 684.0 L765.3 685.8 L768.0 687.7 L770.5 689.6 L773.1 691.4 L775.5 693.2 L777.9 695.0 L780.2 696.8 L782.5 698.6 L784.6 700.4 L786.7 702.1 L788.8 703.9 L790.8 705.6 L792.7 707.3 L794.5 708.9 L796.2 710.6 L797.9 712.2 L799.5 713.8 L801.1 715.4 L802.5 717.0 L803.9 718.6 L805.2 720.1 L806.4 721.6 L807.6 723.1 L808.7 724.5 L809.7 726.0 L810.6 727.4 L811.4 728.8 L812.2 730.1 L812.9 731.5 L813.5 732.8 L814.1 734.0 L814.5 735.3 L814.9 736.5 L815.2 737.7 L815.4 738.9 L815.6 740.0 L815.6 741.1 L815.6 742.2 L815.5 743.3 L815.3 744.3 L815.1 745.3 Z" fill="none"/><line x1="652.5" y1="394.5" x2="308.7" y2="534.9"/><line x1="652.5" y1="394.5" x2="813.2" y2="732.1"/><line x1="652.5" y1="394.5" x2="722.0" y2="658.7"/><line x1="652.5" y1="394.5" x2="390.8" y2="631.9"/><line x1="722.0" y1="658.7" x2="390.8" y2="631.9"/><path d="M624.5 668.5 L624.4 668.8 L624.3 669.0 L624.1 669.2 L623.9 669.4 L623.8 669.7 L623.5 669.9 L623.3 670.1 L623.1 670.2 L622.8 670.4 L622.5 670.6 L622.2 670.7 L621.9 670.9 L621.5 671.0 L621.2 671.2 L620.8 671.3 L620.4 671.4 L619.9 671.5 L619.5 671.6 L619.0 671.7 L618.5 671.8 L618.0 671.9 L617.5 671.9 L617.0 672.0 L616.4 672.0 L615.8 672.1 L615.2 672.1 L614.6 672.1 L614.0 672.1 L613.3 672.1 L612.7 672.1 L612.0 672.1 L611.3 672.1 L610.6 672.0 L609.9 672.0 L609.1 671.9 L608.3 671.9 L607.6 671.8 L606.8 671.7 L606.0 671.6 L605.1 671.5 L604.3 671.4 L603.4 671.3 L602.6 671.2 L601.7 671.0 L600.8 670.9 L599.9 670.7 L599.0 670.6 L598.0 670.4 L597.1 670.2 L596.1 670.0 L595.2 669.8 L594.2 669.6 L593.2 669.4 L592.2 669.2 L591.2 669.0 L590.1 668.7 L589.1 668.5 L588.0 668.2 L587.0 668.0 L585.9 667.7 L584.9 667.4 L583.8 667.1 L582.7 666.9 L581.6 666.6 L580.5 666.2 L579.4 665.9 L578.2 665.6 L577.1 665.3 L576.0 664.9 L574.8 664.6 L573.7 664.3 L572.6 663.9 L571.4 663.5 L570.2 663.2 L569.1 662.8 L567.9 662.4 L566.7 662.0 L565.6 661.6 L564.4 661.2 L563.2 660.8 L562.0 660.4 L560.9 660.0 L559.7 659.6 L558.5 659.2 L557.3 658.7 L556.1 658.3 L554.9 657.8 L553.8 657.4 L552.6 657.0 L551.4 656.5 L550.2 656.0 L549.0 655.6 L547.9 655.1 L546.7 654.6 L545.5 654.2 L544.4 653.7 L543.2 653.2 L542.0 652.7 L540.9 652.2 L539.7 651.7 L538.6 651.2 L537.5 650.7 L536.3 650.2 L535.2 649.7 L534.1 649.2 L533.0 648.7 L531.9 648.2 L530.8 647.7 L529.7 647.2 L528.6 646.7 L527.5 646.2 L526.5 645.6 L525.4 645.1 L524.4 644.6 L523.3 644.1 L522.3 643.6 L521.3 643.0 L520.3 642.5 L519.3 642.0 L518.3 641.5 L517.4 641.0 L516.4 640.4 L515.5 639.9 L514.5 639.4 L513.6 638.9 L512.7 638.4 L511.8 637.9 L510.9 637.3 L510.1 636.8 L509.2 636.3 L508.4 635.8 L507.6 635.3 L506.8 634.8 L506.0 634.3 L505.2 633.8 L504.5 633.3 L503.7 632.8 L503.0 632.3 L502.3 631.8 L501.6 631.3 L500.9 630.9 L500.2 630.4 L499.6 629.9 L499.0 629.4 L498.4 629.0 L497.8 628.5 L497.2 628.0 L496.7 627.6 L496.1 627.1 L495.6 626.7 L495.1 626.3 L494.6 625.8 L494.2 625.4 L493.7 625.0 L493.3 624.5 L492.9 624.1 L492.5 623.7 L492.2 623.3 L491.8 622.9 L491.5 622.5 L491.2 622.1 L490.9 621.8 L490.7 621.4 L490.4 621.0 L490.2 620.6 L490.0 620.3 L489.8 619.9 L489.6 619.6 L489.5 619.3 L489.4 618.9 L489.3 618.6 L489.2 618.3 L489.1 618.0 L489.1 617.7 L489.1 617.4 L489.1 617.1 L489.1 616.9 L489.2 616.6 L489.2 616.3 L489.3 616.1 L489.4 615.8 L489.5 615.6 L489.7 615.4 L489.9 615.2 L490.0 614.9 L490.3 614.7 L490.5 614.5 L490.7 614.4 L491.0 614.2 L491.3 614.0 L491.6 613.9 L491.9 613.7 L492.3 613.6 L492.6 613.4 L493.0 613.3 L493.4 613.2 L493.9 613.1 L494.3 613.0 L494.8 612.9 L495.3 612.8 L495.8 612.7 L496.3 612.7 L496.8 612.6 L497.4 612.6 L498.0 612.5 L498.6 612.5 L499.2 612.5 L499.8 612.5 L500.5 612.5 L501.1 612.5 L501.8 612.5 L502.5 612.5 L503.2 612.6 L503.9 612.6 L504.7 612.7 L505.5 612.7 L506.2 612.8 L507.0 612.9 L507.8 613.0 L508.7 613.1 L509.5 613.2 L510.4 613.3 L511.2 613.4 L512.1 613.6 L513.0 613.7 L513.9 613.9 L514.8 614.0 L515.8 614.2 L516.7 614.4 L517.7 614.6 L518.6 614.8 L519.6 615.0 L520.6 615.2 L521.6 615.4 L522.6 615.6 L523.7 615.9 L524.7 616.1 L525.8 616.4 L526.8 616.6 L527.9 616.9 L528.9 617.2 L530.0 617.5 L531.1 617.7 L532.2 618.0 L533.3 618.4 L534.4 618.7 L535.6 619.0 L536.7 619.3 L537.8 619.7 L539.0 620.0 L540.1 620.3 L541.2 620.7 L542.4 621.1 L543.6 621.4 L544.7 621.8 L545.9 622.2 L547.1 622.6 L548.2 623.0 L549.4 623.4 L550.6 623.8 L551.8 624.2 L552.9 624.6 L554.1 625.0 L555.3 625.4 L556.5 625.9 L557.7 626.3 L558.9 626.8 L560.0 627.2 L561.2 627.6 L562.4 628.1 L563.6 628.6 L564.8 629.0 L565.9 629.5 L567.1 630.0 L568.3 630.4 L569.4 630.9 L570.6 631.4 L571.8 631.9 L572.9 632.4 L574.1 632.9 L575.2 633.4 L576.3 633.9 L577.5 634.4 L578.6 634.9 L579.7 635.4 L580.8 635.9 L581.9 636.4 L583.0 636.9 L584.1 637.4 L585.2 637.9 L586.3 638.4 L587.3 639.0 L588.4 639.5 L589.4 640.0 L590.5 640.5 L591.5 641.0 L592.5 641.6 L593.5 642.1 L594.5 642.6 L595.5 643.1 L596.4 643.6 L597.4 644.2 L598.3 644.7 L599.3 645.2 L600.2 645.7 L601.1 646.2 L602.0 646.7 L602.9 647.3 L603.7 647.8 L604.6 648.3 L605.4 648.8 L606.2 649.3 L607.0 649.8 L607.8 650.3 L608.6 650.8 L609.3 651.3 L610.1 651.8 L610.8 652.3 L611.5 652.8 L612.2 653.3 L612.9 653.7 L613.6 654.2 L614.2 654.7 L614.8 655.2 L615.4 655.6 L616.0 656.1 L616.6 656.6 L617.1 657.0 L617.7 657.5 L618.2 657.9 L618.7 658.3 L619.2 658.8 L619.6 659.2 L620.1 659.6 L620.5 660.1 L620.9 660.5 L621.3 660.9 L621.6 661.3 L622.0 661.7 L622.3 662.1 L622.6 662.5 L622.9 662.8 L623.1 663.2 L623.4 663.6 L623.6 664.0 L623.8 664.3 L624.0 664.7 L624.2 665.0 L624.3 665.3 L624.4 665.7 L624.5 666.0 L624.6 666.3 L624.7 666.6 L624.7 666.9 L624.7 667.2 L624.7 667.5 L624.7 667.7 L624.6 668.0 L624.6 668.3 Z" fill="none"/><line x1="652.5" y1="394.5" x2="489.8" y2="615.3"/><line x1="652.5" y1="394.5" x2="624.7" y2="667.6"/><line x1="652.5" y1="394.5" x2="600.2" y2="645.7"/><line x1="652.5" y1="394.5" x2="513.6" y2="638.9"/><line x1="600.2" y1="645.7" x2="513.6" y2="638.9"/><path d="M936.6 675.8 L936.2 676.7 L935.7 677.6 L935.1 678.5 L934.5 679.3 L933.8 680.1 L933.0 680.9 L932.1 681.6 L931.1 682.3 L930.1 683.0 L929.0 683.7 L927.8 684.3 L926.5 684.9 L925.2 685.4 L923.8 685.9 L922.3 686.4 L920.7 686.8 L919.1 687.2 L917.4 687.6 L915.6 687.9 L913.8 688.3 L911.8 688.5 L909.8 688.8 L907.8 689.0 L905.6 689.1 L903.4 689.3 L901.1 689.4 L898.8 689.4 L896.4 689.4 L893.9 689.4 L891.4 689.4 L888.8 689.3 L886.1 689.2 L883.4 689.1 L880.6 688.9 L877.7 688.7 L874.8 688.4 L871.8 688.1 L868.8 687.8 L865.7 687.4 L862.5 687.1 L859.3 686.6 L856.0 686.2 L852.7 685.7 L849.3 685.2 L845.9 684.6 L842.4 684.0 L838.9 683.4 L835.3 682.7 L831.7 682.0 L828.0 681.3 L824.3 680.6 L820.6 679.8 L816.8 678.9 L812.9 678.1 L809.0 677.2 L805.1 676.3 L801.1 675.3 L797.1 674.4 L793.1 673.4 L789.0 672.3 L784.9 671.3 L780.8 670.2 L776.6 669.0 L772.4 667.9 L768.2 666.7 L763.9 665.5 L759.6 664.2 L755.3 663.0 L751.0 661.7 L746.6 660.4 L742.3 659.0 L737.9 657.7 L733.5 656.3 L729.0 654.8 L724.6 653.4 L720.1 651.9 L715.7 650.4 L711.2 648.9 L706.7 647.4 L702.2 645.8 L697.7 644.2 L693.2 642.6 L688.6 641.0 L684.1 639.4 L679.6 637.7 L675.1 636.0 L670.6 634.3 L666.0 632.6 L661.5 630.9 L657.0 629.1 L652.5 627.3 L648.0 625.5 L643.5 623.7 L639.0 621.9 L634.6 620.1 L630.1 618.2 L625.7 616.4 L621.3 614.5 L616.8 612.6 L612.5 610.7 L608.1 608.8 L603.7 606.9 L599.4 605.0 L595.1 603.1 L590.9 601.1 L586.6 599.2 L582.4 597.2 L578.2 595.2 L574.0 593.3 L569.9 591.3 L565.8 589.3 L561.8 587.3 L557.7 585.3 L553.8 583.3 L549.8 581.3 L545.9 579.3 L542.0 577.3 L538.2 575.3 L534.4 573.3 L530.7 571.3 L527.0 569.3 L523.3 567.3 L519.7 565.3 L516.2 563.3 L512.7 561.4 L509.2 559.4 L505.8 557.4 L502.4 555.4 L499.1 553.4 L495.9 551.5 L492.7 549.5 L489.6 547.6 L486.5 545.6 L483.5 543.7 L480.5 541.8 L477.6 539.9 L474.8 538.0 L472.0 536.1 L469.3 534.2 L466.7 532.3 L464.1 530.5 L461.6 528.6 L459.1 526.8 L456.7 525.0 L454.4 523.2 L452.2 521.4 L450.0 519.7 L447.9 517.9 L445.8 516.2 L443.9 514.5 L442.0 512.8 L440.1 511.1 L438.4 509.5 L436.7 507.8 L435.1 506.2 L433.6 504.6 L432.1 503.0 L430.7 501.5 L429.4 500.0 L428.2 498.5 L427.0 497.0 L426.0 495.5 L425.0 494.1 L424.0 492.7 L423.2 491.3 L422.4 489.9 L421.7 488.6 L421.1 487.3 L420.6 486.0 L420.1 484.7 L419.7 483.5 L419.4 482.3 L419.2 481.2 L419.1 480.0 L419.0 478.9 L419.0 477.8 L419.1 476.8 L419.3 475.7 L419.5 474.7 L419.9 473.8 L420.3 472.8 L420.8 471.9 L421.3 471.1 L422.0 470.2 L422.7 469.4 L423.5 468.7 L424.4 467.9 L425.3 467.2 L426.4 466.5 L427.5 465.9 L428.7 465.3 L429.9 464.7 L431.3 464.1 L432.7 463.6 L434.2 463.2 L435.7 462.7 L437.4 462.3 L439.1 461.9 L440.9 461.6 L442.7 461.3 L444.6 461.0 L446.6 460.8 L448.7 460.6 L450.9 460.4 L453.1 460.3 L455.3 460.2 L457.7 460.1 L460.1 460.1 L462.6 460.1 L465.1 460.1 L467.7 460.2 L470.4 460.3 L473.1 460.5 L475.9 460.7 L478.8 460.9 L481.7 461.1 L484.7 461.4 L487.7 461.7 L490.8 462.1 L494.0 462.5 L497.2 462.9 L500.5 463.4 L503.8 463.9 L507.1 464.4 L510.6 464.9 L514.0 465.5 L517.6 466.2 L521.1 466.8 L524.8 467.5 L528.4 468.2 L532.2 469.0 L535.9 469.8 L539.7 470.6 L543.6 471.5 L547.4 472.3 L551.4 473.3 L555.3 474.2 L559.3 475.2 L563.4 476.2 L567.5 477.2 L571.6 478.3 L575.7 479.4 L579.9 480.5 L584.1 481.7 L588.3 482.8 L592.6 484.1 L596.8 485.3 L601.1 486.6 L605.5 487.9 L609.8 489.2 L614.2 490.5 L618.6 491.9 L623.0 493.3 L627.4 494.7 L631.9 496.1 L636.3 497.6 L640.8 499.1 L645.3 500.6 L649.8 502.2 L654.3 503.7 L658.8 505.3 L663.3 506.9 L667.8 508.5 L672.4 510.2 L676.9 511.8 L681.4 513.5 L685.9 515.2 L690.4 516.9 L695.0 518.7 L699.5 520.4 L704.0 522.2 L708.5 524.0 L713.0 525.8 L717.4 527.6 L721.9 529.4 L726.4 531.3 L730.8 533.1 L735.2 535.0 L739.6 536.9 L744.0 538.8 L748.4 540.7 L752.7 542.6 L757.1 544.5 L761.4 546.5 L765.6 548.4 L769.9 550.4 L774.1 552.3 L778.3 554.3 L782.4 556.3 L786.6 558.3 L790.7 560.2 L794.7 562.2 L798.7 564.2 L802.7 566.2 L806.7 568.2 L810.6 570.2 L814.5 572.2 L818.3 574.2 L822.1 576.2 L825.8 578.2 L829.5 580.2 L833.2 582.2 L836.8 584.2 L840.3 586.2 L843.8 588.2 L847.3 590.2 L850.7 592.2 L854.0 594.1 L857.3 596.1 L860.6 598.1 L863.8 600.0 L866.9 602.0 L870.0 603.9 L873.0 605.8 L875.9 607.8 L878.8 609.7 L881.7 611.6 L884.5 613.5 L887.2 615.3 L889.8 617.2 L892.4 619.1 L894.9 620.9 L897.4 622.7 L899.7 624.5 L902.1 626.3 L904.3 628.1 L906.5 629.9 L908.6 631.6 L910.6 633.4 L912.6 635.1 L914.5 636.8 L916.3 638.4 L918.1 640.1 L919.8 641.7 L921.4 643.3 L922.9 644.9 L924.4 646.5 L925.7 648.1 L927.1 649.6 L928.3 651.1 L929.4 652.6 L930.5 654.0 L931.5 655.5 L932.4 656.9 L933.3 658.3 L934.1 659.6 L934.8 661.0 L935.4 662.3 L935.9 663.5 L936.4 664.8 L936.7 666.0 L937.0 667.2 L937.3 668.4 L937.4 669.5 L937.5 670.6 L937.5 671.7 L937.4 672.8 L937.2 673.8 L936.9 674.8 Z" fill="none"/><line x1="774.4" y1="324.0" x2="430.6" y2="464.4"/><line x1="774.4" y1="324.0" x2="935.1" y2="661.6"/><line x1="774.4" y1="324.0" x2="843.8" y2="588.2"/><line x1="774.4" y1="324.0" x2="512.7" y2="561.4"/><line x1="843.8" y1="588.2" x2="512.7" y2="561.4"/><path d="M746.3 598.0 L746.2 598.3 L746.1 598.5 L746.0 598.7 L745.8 598.9 L745.6 599.2 L745.4 599.4 L745.2 599.6 L744.9 599.7 L744.7 599.9 L744.4 600.1 L744.1 600.2 L743.7 600.4 L743.4 600.5 L743.0 600.7 L742.6 600.8 L742.2 600.9 L741.8 601.0 L741.3 601.1 L740.9 601.2 L740.4 601.3 L739.9 601.4 L739.4 601.4 L738.8 601.5 L738.3 601.5 L737.7 601.6 L737.1 601.6 L736.5 601.6 L735.8 601.6 L735.2 601.6 L734.5 601.6 L733.9 601.6 L733.2 601.6 L732.4 601.5 L731.7 601.5 L731.0 601.4 L730.2 601.4 L729.4 601.3 L728.6 601.2 L727.8 601.1 L727.0 601.0 L726.2 600.9 L725.3 600.8 L724.4 600.7 L723.5 600.5 L722.7 600.4 L721.7 600.2 L720.8 600.1 L719.9 599.9 L718.9 599.7 L718.0 599.5 L717.0 599.3 L716.0 599.1 L715.0 598.9 L714.0 598.7 L713.0 598.5 L712.0 598.2 L710.9 598.0 L709.9 597.7 L708.8 597.5 L707.8 597.2 L706.7 596.9 L705.6 596.6 L704.5 596.4 L703.4 596.1 L702.3 595.7 L701.2 595.4 L700.1 595.1 L699.0 594.8 L697.8 594.4 L696.7 594.1 L695.6 593.8 L694.4 593.4 L693.2 593.0 L692.1 592.7 L690.9 592.3 L689.8 591.9 L688.6 591.5 L687.4 591.1 L686.2 590.7 L685.1 590.3 L683.9 589.9 L682.7 589.5 L681.5 589.1 L680.3 588.7 L679.2 588.2 L678.0 587.8 L676.8 587.3 L675.6 586.9 L674.4 586.5 L673.2 586.0 L672.1 585.5 L670.9 585.1 L669.7 584.6 L668.5 584.1 L667.4 583.7 L666.2 583.2 L665.0 582.7 L663.9 582.2 L662.7 581.7 L661.6 581.2 L660.4 580.7 L659.3 580.2 L658.2 579.7 L657.1 579.2 L655.9 578.7 L654.8 578.2 L653.7 577.7 L652.6 577.2 L651.5 576.7 L650.5 576.2 L649.4 575.7 L648.3 575.1 L647.3 574.6 L646.2 574.1 L645.2 573.6 L644.2 573.1 L643.2 572.5 L642.2 572.0 L641.2 571.5 L640.2 571.0 L639.2 570.5 L638.3 569.9 L637.3 569.4 L636.4 568.9 L635.5 568.4 L634.6 567.9 L633.7 567.4 L632.8 566.8 L631.9 566.3 L631.1 565.8 L630.2 565.3 L629.4 564.8 L628.6 564.3 L627.8 563.8 L627.1 563.3 L626.3 562.8 L625.6 562.3 L624.8 561.8 L624.1 561.3 L623.4 560.8 L622.8 560.4 L622.1 559.9 L621.5 559.4 L620.8 558.9 L620.2 558.5 L619.6 558.0 L619.1 557.5 L618.5 557.1 L618.0 556.6 L617.5 556.2 L617.0 555.8 L616.5 555.3 L616.0 554.9 L615.6 554.5 L615.2 554.0 L614.8 553.6 L614.4 553.2 L614.0 552.8 L613.7 552.4 L613.3 552.0 L613.0 551.6 L612.8 551.3 L612.5 550.9 L612.3 550.5 L612.0 550.1 L611.8 549.8 L611.7 549.4 L611.5 549.1 L611.3 548.8 L611.2 548.4 L611.1 548.1 L611.0 547.8 L611.0 547.5 L611.0 547.2 L610.9 546.9 L610.9 546.6 L611.0 546.4 L611.0 546.1 L611.1 545.8 L611.2 545.6 L611.3 545.3 L611.4 545.1 L611.5 544.9 L611.7 544.7 L611.9 544.4 L612.1 544.2 L612.3 544.0 L612.6 543.9 L612.8 543.7 L613.1 543.5 L613.4 543.4 L613.8 543.2 L614.1 543.1 L614.5 542.9 L614.9 542.8 L615.3 542.7 L615.7 542.6 L616.2 542.5 L616.6 542.4 L617.1 542.3 L617.6 542.2 L618.1 542.2 L618.7 542.1 L619.2 542.1 L619.8 542.0 L620.4 542.0 L621.0 542.0 L621.7 542.0 L622.3 542.0 L623.0 542.0 L623.6 542.0 L624.3 542.0 L625.1 542.1 L625.8 542.1 L626.5 542.2 L627.3 542.2 L628.1 542.3 L628.9 542.4 L629.7 542.5 L630.5 542.6 L631.3 542.7 L632.2 542.8 L633.1 542.9 L634.0 543.1 L634.8 543.2 L635.8 543.4 L636.7 543.5 L637.6 543.7 L638.6 543.9 L639.5 544.1 L640.5 544.3 L641.5 544.5 L642.5 544.7 L643.5 544.9 L644.5 545.1 L645.5 545.4 L646.6 545.6 L647.6 545.9 L648.7 546.1 L649.7 546.4 L650.8 546.7 L651.9 547.0 L653.0 547.2 L654.1 547.5 L655.2 547.9 L656.3 548.2 L657.4 548.5 L658.5 548.8 L659.7 549.2 L660.8 549.5 L661.9 549.8 L663.1 550.2 L664.3 550.6 L665.4 550.9 L666.6 551.3 L667.7 551.7 L668.9 552.1 L670.1 552.5 L671.3 552.9 L672.4 553.3 L673.6 553.7 L674.8 554.1 L676.0 554.5 L677.2 554.9 L678.3 555.4 L679.5 555.8 L680.7 556.3 L681.9 556.7 L683.1 557.1 L684.3 557.6 L685.4 558.1 L686.6 558.5 L687.8 559.0 L689.0 559.5 L690.1 559.9 L691.3 560.4 L692.5 560.9 L693.6 561.4 L694.8 561.9 L695.9 562.4 L697.1 562.9 L698.2 563.4 L699.3 563.9 L700.4 564.4 L701.6 564.9 L702.7 565.4 L703.8 565.9 L704.9 566.4 L706.0 566.9 L707.0 567.4 L708.1 567.9 L709.2 568.5 L710.2 569.0 L711.3 569.5 L712.3 570.0 L713.3 570.5 L714.3 571.1 L715.3 571.6 L716.3 572.1 L717.3 572.6 L718.3 573.1 L719.2 573.7 L720.2 574.2 L721.1 574.7 L722.0 575.2 L722.9 575.7 L723.8 576.2 L724.7 576.8 L725.6 577.3 L726.4 577.8 L727.3 578.3 L728.1 578.8 L728.9 579.3 L729.7 579.8 L730.4 580.3 L731.2 580.8 L731.9 581.3 L732.7 581.8 L733.4 582.3 L734.1 582.8 L734.7 583.2 L735.4 583.7 L736.0 584.2 L736.7 584.7 L737.3 585.1 L737.9 585.6 L738.4 586.1 L739.0 586.5 L739.5 587.0 L740.0 587.4 L740.5 587.8 L741.0 588.3 L741.5 588.7 L741.9 589.1 L742.3 589.6 L742.7 590.0 L743.1 590.4 L743.5 590.8 L743.8 591.2 L744.2 591.6 L744.5 592.0 L744.7 592.3 L745.0 592.7 L745.2 593.1 L745.5 593.5 L745.7 593.8 L745.8 594.2 L746.0 594.5 L746.2 594.8 L746.3 595.2 L746.4 595.5 L746.5 595.8 L746.5 596.1 L746.5 596.4 L746.6 596.7 L746.6 597.0 L746.5 597.2 L746.5 597.5 L746.4 597.8 Z" fill="none"/><line x1="774.4" y1="324.0" x2="611.6" y2="544.8"/><line x1="774.4" y1="324.0" x2="746.6" y2="597.1"/><line x1="774.4" y1="324.0" x2="722.0" y2="575.2"/><line x1="774.4" y1="324.0" x2="635.5" y2="568.4"/><line x1="722.0" y1="575.2" x2="635.5" y2="568.4"/><path d="M1058.5 605.3 L1058.0 606.2 L1057.6 607.1 L1057.0 608.0 L1056.3 608.8 L1055.6 609.6 L1054.8 610.4 L1053.9 611.1 L1053.0 611.8 L1051.9 612.5 L1050.8 613.2 L1049.7 613.8 L1048.4 614.4 L1047.1 614.9 L1045.6 615.4 L1044.2 615.9 L1042.6 616.3 L1041.0 616.7 L1039.2 617.1 L1037.5 617.4 L1035.6 617.8 L1033.7 618.0 L1031.7 618.3 L1029.6 618.5 L1027.5 618.6 L1025.3 618.8 L1023.0 618.9 L1020.7 618.9 L1018.2 618.9 L1015.8 618.9 L1013.2 618.9 L1010.6 618.8 L1007.9 618.7 L1005.2 618.6 L1002.4 618.4 L999.5 618.2 L996.6 617.9 L993.6 617.6 L990.6 617.3 L987.5 616.9 L984.4 616.6 L981.1 616.1 L977.9 615.7 L974.6 615.2 L971.2 614.7 L967.8 614.1 L964.3 613.5 L960.8 612.9 L957.2 612.2 L953.6 611.5 L949.9 610.8 L946.2 610.1 L942.4 609.3 L938.6 608.4 L934.8 607.6 L930.9 606.7 L927.0 605.8 L923.0 604.8 L919.0 603.9 L915.0 602.9 L910.9 601.8 L906.8 600.8 L902.6 599.7 L898.5 598.5 L894.3 597.4 L890.0 596.2 L885.8 595.0 L881.5 593.7 L877.2 592.5 L872.9 591.2 L868.5 589.9 L864.1 588.5 L859.7 587.2 L855.3 585.8 L850.9 584.3 L846.4 582.9 L842.0 581.4 L837.5 579.9 L833.0 578.4 L828.5 576.9 L824.0 575.3 L819.5 573.7 L815.0 572.1 L810.5 570.5 L806.0 568.9 L801.5 567.2 L796.9 565.5 L792.4 563.8 L787.9 562.1 L783.4 560.4 L778.9 558.6 L774.3 556.8 L769.8 555.0 L765.4 553.2 L760.9 551.4 L756.4 549.6 L752.0 547.7 L747.5 545.9 L743.1 544.0 L738.7 542.1 L734.3 540.2 L729.9 538.3 L725.6 536.4 L721.3 534.5 L717.0 532.6 L712.7 530.6 L708.5 528.7 L704.2 526.7 L700.1 524.7 L695.9 522.8 L691.8 520.8 L687.7 518.8 L683.6 516.8 L679.6 514.8 L675.6 512.8 L671.7 510.8 L667.7 508.8 L663.9 506.8 L660.0 504.8 L656.3 502.8 L652.5 500.8 L648.8 498.8 L645.2 496.8 L641.6 494.8 L638.0 492.8 L634.5 490.9 L631.0 488.9 L627.6 486.9 L624.3 484.9 L621.0 482.9 L617.7 481.0 L614.6 479.0 L611.4 477.1 L608.4 475.1 L605.3 473.2 L602.4 471.3 L599.5 469.4 L596.7 467.5 L593.9 465.6 L591.2 463.7 L588.5 461.8 L585.9 460.0 L583.4 458.1 L581.0 456.3 L578.6 454.5 L576.3 452.7 L574.0 450.9 L571.8 449.2 L569.7 447.4 L567.7 445.7 L565.7 444.0 L563.8 442.3 L562.0 440.6 L560.2 439.0 L558.6 437.3 L557.0 435.7 L555.4 434.1 L554.0 432.5 L552.6 431.0 L551.3 429.5 L550.0 428.0 L548.9 426.5 L547.8 425.0 L546.8 423.6 L545.9 422.2 L545.0 420.8 L544.3 419.4 L543.6 418.1 L543.0 416.8 L542.4 415.5 L542.0 414.2 L541.6 413.0 L541.3 411.8 L541.1 410.7 L540.9 409.5 L540.9 408.4 L540.9 407.3 L541.0 406.3 L541.1 405.2 L541.4 404.2 L541.7 403.3 L542.1 402.3 L542.6 401.4 L543.2 400.6 L543.8 399.7 L544.6 398.9 L545.4 398.2 L546.2 397.4 L547.2 396.7 L548.2 396.0 L549.3 395.4 L550.5 394.8 L551.8 394.2 L553.1 393.6 L554.5 393.1 L556.0 392.7 L557.6 392.2 L559.2 391.8 L560.9 391.4 L562.7 391.1 L564.6 390.8 L566.5 390.5 L568.5 390.3 L570.6 390.1 L572.7 389.9 L574.9 389.8 L577.2 389.7 L579.5 389.6 L581.9 389.6 L584.4 389.6 L587.0 389.6 L589.6 389.7 L592.2 389.8 L595.0 390.0 L597.8 390.2 L600.6 390.4 L603.6 390.6 L606.5 390.9 L609.6 391.2 L612.7 391.6 L615.8 392.0 L619.0 392.4 L622.3 392.9 L625.6 393.4 L629.0 393.9 L632.4 394.4 L635.9 395.0 L639.4 395.7 L643.0 396.3 L646.6 397.0 L650.3 397.7 L654.0 398.5 L657.8 399.3 L661.6 400.1 L665.4 401.0 L669.3 401.8 L673.2 402.8 L677.2 403.7 L681.2 404.7 L685.2 405.7 L689.3 406.7 L693.4 407.8 L697.5 408.9 L701.7 410.0 L705.9 411.2 L710.1 412.3 L714.4 413.6 L718.7 414.8 L723.0 416.1 L727.3 417.4 L731.7 418.7 L736.1 420.0 L740.5 421.4 L744.9 422.8 L749.3 424.2 L753.7 425.6 L758.2 427.1 L762.7 428.6 L767.1 430.1 L771.6 431.7 L776.1 433.2 L780.7 434.8 L785.2 436.4 L789.7 438.0 L794.2 439.7 L798.7 441.3 L803.3 443.0 L807.8 444.7 L812.3 446.4 L816.8 448.2 L821.3 449.9 L825.8 451.7 L830.3 453.5 L834.8 455.3 L839.3 457.1 L843.8 458.9 L848.2 460.8 L852.7 462.6 L857.1 464.5 L861.5 466.4 L865.9 468.3 L870.2 470.2 L874.6 472.1 L878.9 474.0 L883.2 476.0 L887.5 477.9 L891.7 479.9 L895.9 481.8 L900.1 483.8 L904.3 485.8 L908.4 487.8 L912.5 489.7 L916.6 491.7 L920.6 493.7 L924.6 495.7 L928.5 497.7 L932.4 499.7 L936.3 501.7 L940.1 503.7 L943.9 505.7 L947.7 507.7 L951.4 509.7 L955.0 511.7 L958.6 513.7 L962.2 515.7 L965.7 517.7 L969.1 519.7 L972.5 521.7 L975.9 523.6 L979.2 525.6 L982.4 527.6 L985.6 529.5 L988.8 531.5 L991.8 533.4 L994.8 535.3 L997.8 537.3 L1000.7 539.2 L1003.5 541.1 L1006.3 543.0 L1009.0 544.8 L1011.7 546.7 L1014.2 548.6 L1016.8 550.4 L1019.2 552.2 L1021.6 554.0 L1023.9 555.8 L1026.2 557.6 L1028.3 559.4 L1030.4 561.1 L1032.5 562.9 L1034.5 564.6 L1036.4 566.3 L1038.2 567.9 L1039.9 569.6 L1041.6 571.2 L1043.2 572.8 L1044.8 574.4 L1046.2 576.0 L1047.6 577.6 L1048.9 579.1 L1050.1 580.6 L1051.3 582.1 L1052.4 583.5 L1053.4 585.0 L1054.3 586.4 L1055.1 587.8 L1055.9 589.1 L1056.6 590.5 L1057.2 591.8 L1057.8 593.0 L1058.2 594.3 L1058.6 595.5 L1058.9 596.7 L1059.1 597.9 L1059.3 599.0 L1059.3 600.1 L1059.3 601.2 L1059.2 602.3 L1059.0 603.3 L1058.8 604.3 Z" fill="none"/><line x1="896.2" y1="253.5" x2="552.4" y2="393.9"/><line x1="896.2" y1="253.5" x2="1056.9" y2="591.1"/><line x1="896.2" y1="253.5" x2="965.7" y2="517.7"/><line x1="896.2" y1="253.5" x2="634.5" y2="490.9"/><line x1="965.7" y1="517.7" x2="634.5" y2="490.9"/><path d="M868.2 527.5 L868.1 527.8 L868.0 528.0 L867.8 528.2 L867.6 528.4 L867.5 528.7 L867.2 528.9 L867.0 529.1 L866.8 529.2 L866.5 529.4 L866.2 529.6 L865.9 529.7 L865.6 529.9 L865.2 530.0 L864.9 530.2 L864.5 530.3 L864.1 530.4 L863.6 530.5 L863.2 530.6 L862.7 530.7 L862.2 530.8 L861.7 530.9 L861.2 530.9 L860.7 531.0 L860.1 531.0 L859.5 531.1 L858.9 531.1 L858.3 531.1 L857.7 531.1 L857.0 531.1 L856.4 531.1 L855.7 531.1 L855.0 531.1 L854.3 531.0 L853.6 531.0 L852.8 530.9 L852.0 530.9 L851.3 530.8 L850.5 530.7 L849.7 530.6 L848.8 530.5 L848.0 530.4 L847.1 530.3 L846.3 530.2 L845.4 530.0 L844.5 529.9 L843.6 529.7 L842.7 529.6 L841.7 529.4 L840.8 529.2 L839.8 529.0 L838.9 528.8 L837.9 528.6 L836.9 528.4 L835.9 528.2 L834.9 528.0 L833.8 527.7 L832.8 527.5 L831.7 527.2 L830.7 527.0 L829.6 526.7 L828.6 526.4 L827.5 526.1 L826.4 525.9 L825.3 525.6 L824.2 525.2 L823.1 524.9 L821.9 524.6 L820.8 524.3 L819.7 523.9 L818.5 523.6 L817.4 523.3 L816.3 522.9 L815.1 522.5 L813.9 522.2 L812.8 521.8 L811.6 521.4 L810.4 521.0 L809.3 520.6 L808.1 520.2 L806.9 519.8 L805.7 519.4 L804.6 519.0 L803.4 518.6 L802.2 518.2 L801.0 517.7 L799.8 517.3 L798.6 516.8 L797.5 516.4 L796.3 516.0 L795.1 515.5 L793.9 515.0 L792.7 514.6 L791.6 514.1 L790.4 513.6 L789.2 513.2 L788.1 512.7 L786.9 512.2 L785.7 511.7 L784.6 511.2 L783.4 510.7 L782.3 510.2 L781.2 509.7 L780.0 509.2 L778.9 508.7 L777.8 508.2 L776.7 507.7 L775.6 507.2 L774.5 506.7 L773.4 506.2 L772.3 505.7 L771.2 505.2 L770.2 504.6 L769.1 504.1 L768.1 503.6 L767.0 503.1 L766.0 502.6 L765.0 502.0 L764.0 501.5 L763.0 501.0 L762.0 500.5 L761.1 500.0 L760.1 499.4 L759.2 498.9 L758.2 498.4 L757.3 497.9 L756.4 497.4 L755.5 496.9 L754.6 496.3 L753.8 495.8 L752.9 495.3 L752.1 494.8 L751.3 494.3 L750.5 493.8 L749.7 493.3 L748.9 492.8 L748.2 492.3 L747.4 491.8 L746.7 491.3 L746.0 490.8 L745.3 490.3 L744.6 489.9 L743.9 489.4 L743.3 488.9 L742.7 488.4 L742.1 488.0 L741.5 487.5 L740.9 487.0 L740.4 486.6 L739.8 486.1 L739.3 485.7 L738.8 485.3 L738.3 484.8 L737.9 484.4 L737.4 484.0 L737.0 483.5 L736.6 483.1 L736.2 482.7 L735.9 482.3 L735.5 481.9 L735.2 481.5 L734.9 481.1 L734.6 480.8 L734.4 480.4 L734.1 480.0 L733.9 479.6 L733.7 479.3 L733.5 478.9 L733.3 478.6 L733.2 478.3 L733.1 477.9 L733.0 477.6 L732.9 477.3 L732.8 477.0 L732.8 476.7 L732.8 476.4 L732.8 476.1 L732.8 475.9 L732.9 475.6 L732.9 475.3 L733.0 475.1 L733.1 474.8 L733.2 474.6 L733.4 474.4 L733.6 474.2 L733.7 473.9 L734.0 473.7 L734.2 473.5 L734.4 473.4 L734.7 473.2 L735.0 473.0 L735.3 472.9 L735.6 472.7 L736.0 472.6 L736.3 472.4 L736.7 472.3 L737.1 472.2 L737.6 472.1 L738.0 472.0 L738.5 471.9 L739.0 471.8 L739.5 471.7 L740.0 471.7 L740.5 471.6 L741.1 471.6 L741.7 471.5 L742.3 471.5 L742.9 471.5 L743.5 471.5 L744.2 471.5 L744.8 471.5 L745.5 471.5 L746.2 471.5 L746.9 471.6 L747.6 471.6 L748.4 471.7 L749.2 471.7 L749.9 471.8 L750.7 471.9 L751.5 472.0 L752.4 472.1 L753.2 472.2 L754.1 472.3 L754.9 472.4 L755.8 472.6 L756.7 472.7 L757.6 472.9 L758.5 473.0 L759.5 473.2 L760.4 473.4 L761.4 473.6 L762.3 473.8 L763.3 474.0 L764.3 474.2 L765.3 474.4 L766.3 474.6 L767.4 474.9 L768.4 475.1 L769.5 475.4 L770.5 475.6 L771.6 475.9 L772.6 476.2 L773.7 476.5 L774.8 476.7 L775.9 477.0 L777.0 477.4 L778.1 477.7 L779.3 478.0 L780.4 478.3 L781.5 478.7 L782.7 479.0 L783.8 479.3 L784.9 479.7 L786.1 480.1 L787.3 480.4 L788.4 480.8 L789.6 481.2 L790.8 481.6 L791.9 482.0 L793.1 482.4 L794.3 482.8 L795.5 483.2 L796.6 483.6 L797.8 484.0 L799.0 484.4 L800.2 484.9 L801.4 485.3 L802.6 485.8 L803.7 486.2 L804.9 486.6 L806.1 487.1 L807.3 487.6 L808.5 488.0 L809.6 488.5 L810.8 489.0 L812.0 489.4 L813.1 489.9 L814.3 490.4 L815.5 490.9 L816.6 491.4 L817.8 491.9 L818.9 492.4 L820.0 492.9 L821.2 493.4 L822.3 493.9 L823.4 494.4 L824.5 494.9 L825.6 495.4 L826.7 495.9 L827.8 496.4 L828.9 496.9 L830.0 497.4 L831.0 498.0 L832.1 498.5 L833.1 499.0 L834.2 499.5 L835.2 500.0 L836.2 500.6 L837.2 501.1 L838.2 501.6 L839.2 502.1 L840.1 502.6 L841.1 503.2 L842.0 503.7 L843.0 504.2 L843.9 504.7 L844.8 505.2 L845.7 505.7 L846.6 506.3 L847.4 506.8 L848.3 507.3 L849.1 507.8 L849.9 508.3 L850.7 508.8 L851.5 509.3 L852.3 509.8 L853.0 510.3 L853.8 510.8 L854.5 511.3 L855.2 511.8 L855.9 512.3 L856.6 512.7 L857.3 513.2 L857.9 513.7 L858.5 514.2 L859.1 514.6 L859.7 515.1 L860.3 515.6 L860.8 516.0 L861.4 516.5 L861.9 516.9 L862.4 517.3 L862.9 517.8 L863.3 518.2 L863.8 518.6 L864.2 519.1 L864.6 519.5 L865.0 519.9 L865.3 520.3 L865.7 520.7 L866.0 521.1 L866.3 521.5 L866.6 521.8 L866.8 522.2 L867.1 522.6 L867.3 523.0 L867.5 523.3 L867.7 523.7 L867.9 524.0 L868.0 524.3 L868.1 524.7 L868.2 525.0 L868.3 525.3 L868.4 525.6 L868.4 525.9 L868.4 526.2 L868.4 526.5 L868.4 526.7 L868.3 527.0 L868.3 527.3 Z" fill="none"/><line x1="896.2" y1="253.5" x2="733.5" y2="474.3"/><line x1="896.2" y1="253.5" x2="868.4" y2="526.6"/><line x1="896.2" y1="253.5" x2="843.9" y2="504.7"/><line x1="896.2" y1="253.5" x2="757.3" y2="497.9"/><line x1="843.9" y1="504.7" x2="757.3" y2="497.9"/></g>
</g>
</svg>
</body></html>
